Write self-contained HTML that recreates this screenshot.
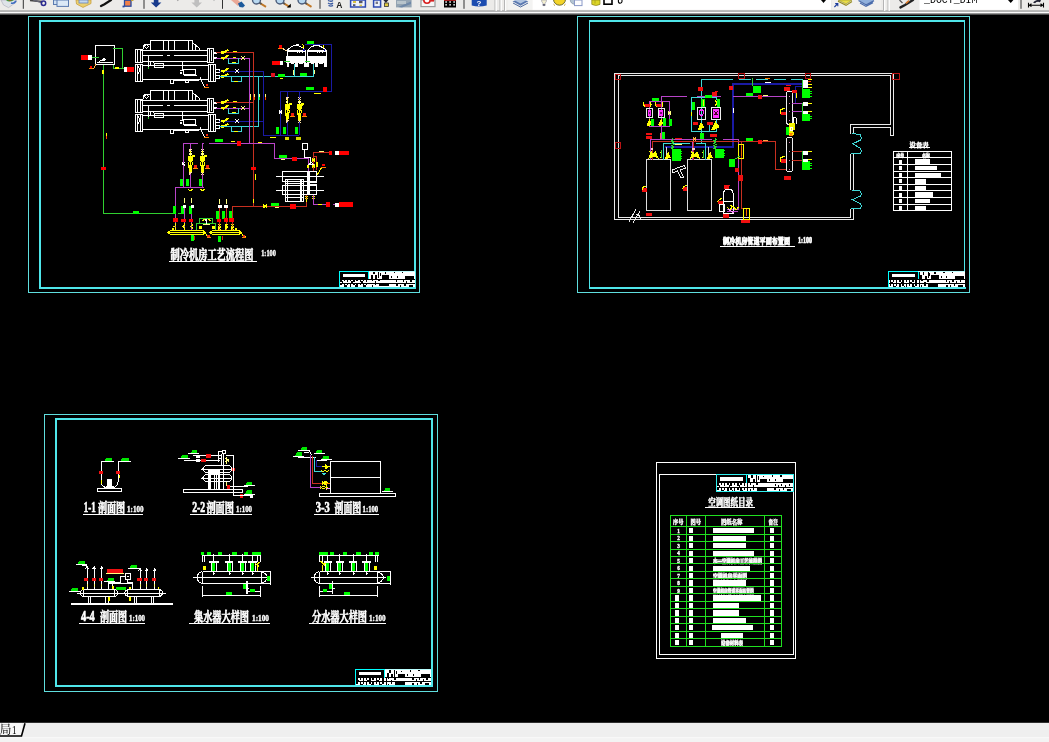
<!DOCTYPE html>
<html lang="zh"><head><meta charset="utf-8"><title>AutoCAD</title>
<style>
html,body{margin:0;padding:0;background:#000;}
body{width:1049px;height:742px;overflow:hidden;position:relative;font-family:"Liberation Sans","Noto Sans CJK SC",sans-serif;}
svg{position:absolute;left:0;top:0;will-change:transform;}
svg text{white-space:pre;}
</style></head><body>
<svg width="1049" height="742" viewBox="0 0 1049 742">
<g id="d1" shape-rendering="crispEdges"><rect x="28.5" y="16.5" width="391.0" height="276.0" fill="none" stroke="#5fdede" stroke-width="1" />
<rect x="40" y="21" width="375" height="267" fill="none" stroke="#4fe6ea" stroke-width="2" />
<rect x="95.5" y="45" width="19.0" height="19.5" fill="none" stroke="#fff" stroke-width="1" />
<rect x="81" y="55" width="7" height="5" fill="#ff0000" stroke="none" stroke-width="1" />
<rect x="88" y="55" width="3.6" height="5" fill="#fff" stroke="none" stroke-width="1" />
<line x1="91.6" y1="57.5" x2="99" y2="57.5" stroke="#30d030" stroke-width="1" />
<line x1="97" y1="62" x2="113" y2="62" stroke="#fff" stroke-width="1" />
<polyline points="99,62 101.5,60 105,60" stroke="#fff" stroke-width="1" fill="none" />
<polyline points="102.5,60 104,58.5 105.5,60" stroke="#fff" stroke-width="1" fill="none" />
<polyline points="113,48.5 122,48.5 122,68 124,68" stroke="#30d030" stroke-width="1" fill="none" />
<polyline points="113,64.5 113,68 122,68" stroke="#30d030" stroke-width="1" fill="none" />
<line x1="115" y1="68" x2="118.5" y2="68" stroke="#ffff00" stroke-width="2" />
<rect x="124" y="67" width="3" height="5" fill="#fff" stroke="none" stroke-width="1" />
<rect x="127" y="67" width="7" height="5" fill="#ff0000" stroke="none" stroke-width="1" />
<polyline points="103.3,64.5 103.3,213.5 175,213.5" stroke="#30d030" stroke-width="1" fill="none" />
<line x1="103.3" y1="70" x2="103.3" y2="73.5" stroke="#ffff00" stroke-width="2" />
<rect x="89.8" y="65.5" width="2.5" height="2.3" fill="#ff0000" stroke="none" stroke-width="1" />
<line x1="88.5" y1="68.6" x2="93.5" y2="68.6" stroke="#ff8000" stroke-width="1" />
<line x1="93.5" y1="68.6" x2="95.8" y2="64.5" stroke="#ffb040" stroke-width="1" />
<rect x="101" y="166.6" width="5" height="3.0" fill="#ff0000" stroke="none" stroke-width="1" />
<line x1="106.3" y1="133" x2="106.3" y2="139" stroke="#ffff00" stroke-width="1" />
<line x1="106.3" y1="136" x2="106.3" y2="139" stroke="#f40" stroke-width="1" />
<rect x="133.3" y="210.6" width="6.0" height="3.8" fill="#00ff00" stroke="none" stroke-width="1" />
<rect x="150.5" y="40.3" width="42.0" height="10.2" fill="none" stroke="#fff" stroke-width="1" />
<line x1="163.5" y1="40.3" x2="163.5" y2="50.5" stroke="#fff" stroke-width="1" />
<line x1="168.5" y1="40.3" x2="168.5" y2="50.5" stroke="#fff" stroke-width="1" />
<line x1="174.5" y1="40.3" x2="174.5" y2="50.5" stroke="#fff" stroke-width="1" />
<line x1="188.5" y1="40.3" x2="188.5" y2="50.5" stroke="#fff" stroke-width="1" />
<path d="M150.5,44 h-3.5 q-3,0 -3.5,3 l-1,3.5" stroke="#fff" stroke-width="1" fill="none" />
<circle cx="146.5" cy="46.5" r="1.6" fill="none" stroke="#fff" stroke-width="1"/>
<polyline points="192.5,42.5 199,48 199,50.5" stroke="#fff" stroke-width="1" fill="none" />
<polyline points="195,45 195,50.5" stroke="#fff" stroke-width="1" fill="none" />
<line x1="141" y1="50.5" x2="207.5" y2="50.5" stroke="#fff" stroke-width="1" />
<line x1="142" y1="55.5" x2="163" y2="55.5" stroke="#fff" stroke-width="1" />
<line x1="167" y1="55.5" x2="170" y2="55.5" stroke="#fff" stroke-width="1" />
<line x1="174" y1="55.5" x2="207.5" y2="55.5" stroke="#fff" stroke-width="1" />
<line x1="142" y1="61.5" x2="207.5" y2="61.5" stroke="#fff" stroke-width="1" />
<line x1="142.5" y1="65" x2="208" y2="65" stroke="#fff" stroke-width="1" />
<line x1="142.5" y1="79.6" x2="208" y2="79.6" stroke="#fff" stroke-width="1" />
<rect x="135.6" y="49.5" width="6.4" height="13.0" fill="none" stroke="#fff" stroke-width="1" />
<line x1="137.6" y1="49.5" x2="137.6" y2="62.5" stroke="#fff" stroke-width="1" />
<line x1="140" y1="49.5" x2="140" y2="62.5" stroke="#fff" stroke-width="1" />
<rect x="135.6" y="64" width="6.9" height="17" fill="none" stroke="#fff" stroke-width="1" />
<line x1="137.8" y1="64" x2="137.8" y2="81" stroke="#fff" stroke-width="1" />
<line x1="140.2" y1="64" x2="140.2" y2="81" stroke="#fff" stroke-width="1" />
<polyline points="138,66 140,70 138,74" stroke="#fff" stroke-width="1" fill="none" />
<rect x="207.5" y="48.5" width="5.5" height="14.0" fill="none" stroke="#fff" stroke-width="1" />
<line x1="209.5" y1="48.5" x2="209.5" y2="62.5" stroke="#fff" stroke-width="1" />
<line x1="211.3" y1="50" x2="211.3" y2="61" stroke="#fff" stroke-width="1" />
<rect x="208" y="64.5" width="7.5" height="16.5" fill="none" stroke="#fff" stroke-width="1" />
<line x1="210.2" y1="64.5" x2="210.2" y2="81" stroke="#fff" stroke-width="1" />
<line x1="213" y1="64.5" x2="213" y2="81" stroke="#fff" stroke-width="1" />
<line x1="213" y1="52.5" x2="217" y2="52.5" stroke="#fff" stroke-width="2" />
<line x1="213" y1="58.2" x2="217" y2="58.2" stroke="#fff" stroke-width="2" />
<rect x="215.5" y="69.6" width="4.0" height="3.0" fill="none" stroke="#fff" stroke-width="1" />
<rect x="215.5" y="75" width="4.0" height="3" fill="none" stroke="#fff" stroke-width="1" />
<line x1="148" y1="55.5" x2="148" y2="67" stroke="#fff" stroke-width="1" />
<line x1="148" y1="66.5" x2="148" y2="68.5" stroke="#30d030" stroke-width="1" />
<line x1="150.5" y1="61.5" x2="150.5" y2="65" stroke="#fff" stroke-width="1" />
<rect x="154.5" y="63.6" width="9.0" height="4.0" fill="none" stroke="#fff" stroke-width="1" />
<polyline points="153,62 154.5,63.6" stroke="#fff" stroke-width="1" fill="none" />
<line x1="182.5" y1="61.5" x2="182.5" y2="70.5" stroke="#fff" stroke-width="1" />
<line x1="179.5" y1="70.5" x2="183.5" y2="70.5" stroke="#fff" stroke-width="1" />
<rect x="183.5" y="69.6" width="12.0" height="4.9" fill="none" stroke="#fff" stroke-width="1" />
<circle cx="181" cy="73" r="0.9" fill="none" stroke="#fff" stroke-width="1"/>
<line x1="184" y1="75.5" x2="196.5" y2="75.5" stroke="#fff" stroke-width="1" />
<rect x="170" y="79.6" width="3.5" height="3.9" fill="none" stroke="#fff" stroke-width="1" />
<rect x="185" y="80.5" width="3.5" height="2.1" fill="none" stroke="#fff" stroke-width="1" />
<rect x="173.5" y="79.6" width="25.5" height="1.4" fill="#fff" stroke="none" stroke-width="1" />
<line x1="200" y1="77.5" x2="204.5" y2="87" stroke="#fff" stroke-width="1" />
<rect x="205.5" y="84" width="2.1" height="2" fill="#f02010" stroke="none" stroke-width="1" />
<line x1="204.3" y1="87.2" x2="209" y2="87.2" stroke="#ff8000" stroke-width="1" />
<rect x="150.5" y="90.3" width="42.0" height="10.2" fill="none" stroke="#fff" stroke-width="1" />
<line x1="163.5" y1="90.3" x2="163.5" y2="100.5" stroke="#fff" stroke-width="1" />
<line x1="168.5" y1="90.3" x2="168.5" y2="100.5" stroke="#fff" stroke-width="1" />
<line x1="174.5" y1="90.3" x2="174.5" y2="100.5" stroke="#fff" stroke-width="1" />
<line x1="188.5" y1="90.3" x2="188.5" y2="100.5" stroke="#fff" stroke-width="1" />
<path d="M150.5,94 h-3.5 q-3,0 -3.5,3 l-1,3.5" stroke="#fff" stroke-width="1" fill="none" />
<circle cx="146.5" cy="96.5" r="1.6" fill="none" stroke="#fff" stroke-width="1"/>
<polyline points="192.5,92.5 199,98 199,100.5" stroke="#fff" stroke-width="1" fill="none" />
<polyline points="195,95 195,100.5" stroke="#fff" stroke-width="1" fill="none" />
<line x1="141" y1="100.5" x2="207.5" y2="100.5" stroke="#fff" stroke-width="1" />
<line x1="142" y1="105.5" x2="163" y2="105.5" stroke="#fff" stroke-width="1" />
<line x1="167" y1="105.5" x2="170" y2="105.5" stroke="#fff" stroke-width="1" />
<line x1="174" y1="105.5" x2="207.5" y2="105.5" stroke="#fff" stroke-width="1" />
<line x1="142" y1="111.5" x2="207.5" y2="111.5" stroke="#fff" stroke-width="1" />
<line x1="142.5" y1="115" x2="208" y2="115" stroke="#fff" stroke-width="1" />
<line x1="142.5" y1="129.6" x2="208" y2="129.6" stroke="#fff" stroke-width="1" />
<rect x="135.6" y="99.5" width="6.4" height="13.0" fill="none" stroke="#fff" stroke-width="1" />
<line x1="137.6" y1="99.5" x2="137.6" y2="112.5" stroke="#fff" stroke-width="1" />
<line x1="140" y1="99.5" x2="140" y2="112.5" stroke="#fff" stroke-width="1" />
<rect x="135.6" y="114" width="6.9" height="17" fill="none" stroke="#fff" stroke-width="1" />
<line x1="137.8" y1="114" x2="137.8" y2="131" stroke="#fff" stroke-width="1" />
<line x1="140.2" y1="114" x2="140.2" y2="131" stroke="#fff" stroke-width="1" />
<polyline points="138,116 140,120 138,124" stroke="#fff" stroke-width="1" fill="none" />
<rect x="207.5" y="98.5" width="5.5" height="14.0" fill="none" stroke="#fff" stroke-width="1" />
<line x1="209.5" y1="98.5" x2="209.5" y2="112.5" stroke="#fff" stroke-width="1" />
<line x1="211.3" y1="100" x2="211.3" y2="111" stroke="#fff" stroke-width="1" />
<rect x="208" y="114.5" width="7.5" height="16.5" fill="none" stroke="#fff" stroke-width="1" />
<line x1="210.2" y1="114.5" x2="210.2" y2="131" stroke="#fff" stroke-width="1" />
<line x1="213" y1="114.5" x2="213" y2="131" stroke="#fff" stroke-width="1" />
<line x1="213" y1="102.5" x2="217" y2="102.5" stroke="#fff" stroke-width="2" />
<line x1="213" y1="108.2" x2="217" y2="108.2" stroke="#fff" stroke-width="2" />
<rect x="215.5" y="119.6" width="4.0" height="3.0" fill="none" stroke="#fff" stroke-width="1" />
<rect x="215.5" y="125" width="4.0" height="3" fill="none" stroke="#fff" stroke-width="1" />
<line x1="148" y1="105.5" x2="148" y2="117" stroke="#fff" stroke-width="1" />
<line x1="148" y1="116.5" x2="148" y2="118.5" stroke="#30d030" stroke-width="1" />
<line x1="150.5" y1="111.5" x2="150.5" y2="115" stroke="#fff" stroke-width="1" />
<rect x="154.5" y="113.6" width="9.0" height="4.0" fill="none" stroke="#fff" stroke-width="1" />
<polyline points="153,112 154.5,113.6" stroke="#fff" stroke-width="1" fill="none" />
<line x1="182.5" y1="111.5" x2="182.5" y2="120.5" stroke="#fff" stroke-width="1" />
<line x1="179.5" y1="120.5" x2="183.5" y2="120.5" stroke="#fff" stroke-width="1" />
<rect x="183.5" y="119.6" width="12.0" height="4.9" fill="none" stroke="#fff" stroke-width="1" />
<circle cx="181" cy="123" r="0.9" fill="none" stroke="#fff" stroke-width="1"/>
<line x1="184" y1="125.5" x2="196.5" y2="125.5" stroke="#fff" stroke-width="1" />
<rect x="170" y="129.6" width="3.5" height="3.9" fill="none" stroke="#fff" stroke-width="1" />
<rect x="185" y="130.5" width="3.5" height="2.1" fill="none" stroke="#fff" stroke-width="1" />
<rect x="173.5" y="129.6" width="25.5" height="1.4" fill="#fff" stroke="none" stroke-width="1" />
<line x1="200" y1="127.5" x2="204.5" y2="137" stroke="#fff" stroke-width="1" />
<rect x="205.5" y="134" width="2.1" height="2" fill="#f02010" stroke="none" stroke-width="1" />
<line x1="204.3" y1="137.2" x2="209" y2="137.2" stroke="#ff8000" stroke-width="1" />
<line x1="216" y1="52.5" x2="253.7" y2="52.5" stroke="#c83020" stroke-width="1" />
<line x1="216" y1="58.2" x2="249.5" y2="58.2" stroke="#b844c8" stroke-width="1" />
<line x1="219" y1="71.2" x2="263.5" y2="71.2" stroke="#1a1aa4" stroke-width="1" />
<polyline points="228,58.2 228,63 238.5,63 238.5,58.2" stroke="#40d8d8" stroke-width="1" fill="none" />
<polyline points="231,76.5 231,81.2 241,81.2 241,76.5" stroke="#40d8d8" stroke-width="1" fill="none" />
<line x1="232" y1="62.5" x2="236" y2="62.5" stroke="#ffff00" stroke-width="1" />
<line x1="234" y1="81" x2="238" y2="81" stroke="#ffff00" stroke-width="1" />
<rect x="220.5" y="51.3" width="3.0" height="2.4" fill="#ffff00" stroke="none" stroke-width="1" />
<line x1="223" y1="53.3" x2="228.5" y2="49.5" stroke="#ffff00" stroke-width="2" />
<rect x="220.5" y="57.0" width="3.0" height="2.4" fill="#ffff00" stroke="none" stroke-width="1" />
<line x1="223" y1="59.0" x2="228.5" y2="55.2" stroke="#ffff00" stroke-width="2" />
<rect x="220.5" y="70.0" width="3.0" height="2.4" fill="#ffff00" stroke="none" stroke-width="1" />
<line x1="223" y1="72.0" x2="228.5" y2="68.2" stroke="#ffff00" stroke-width="2" />
<rect x="220.5" y="75.3" width="3.0" height="2.4" fill="#ffff00" stroke="none" stroke-width="1" />
<line x1="223" y1="77.3" x2="228.5" y2="73.5" stroke="#ffff00" stroke-width="2" />
<line x1="233" y1="51.5" x2="236.5" y2="51.5" stroke="#ffff00" stroke-width="1" />
<line x1="232.5" y1="57.5" x2="236" y2="57.5" stroke="#ffff00" stroke-width="1" />
<line x1="241.2" y1="56.2" x2="244.8" y2="59.8" stroke="#ffff80" stroke-width="1" />
<line x1="241.2" y1="59.8" x2="244.8" y2="56.2" stroke="#ffff80" stroke-width="1" />
<line x1="235.2" y1="69.2" x2="238.8" y2="72.8" stroke="#fff" stroke-width="1" />
<line x1="235.2" y1="72.8" x2="238.8" y2="69.2" stroke="#fff" stroke-width="1" />
<line x1="244" y1="76" x2="247.5" y2="76" stroke="#ffff00" stroke-width="1" />
<line x1="216" y1="102.5" x2="253.7" y2="102.5" stroke="#c83020" stroke-width="1" />
<line x1="216" y1="108.2" x2="249.5" y2="108.2" stroke="#b844c8" stroke-width="1" />
<line x1="219" y1="121.2" x2="263.5" y2="121.2" stroke="#1a1aa4" stroke-width="1" />
<polyline points="228,108.2 228,113 238.5,113 238.5,108.2" stroke="#40d8d8" stroke-width="1" fill="none" />
<polyline points="231,126.5 231,131.2 241,131.2 241,126.5" stroke="#40d8d8" stroke-width="1" fill="none" />
<line x1="232" y1="112.5" x2="236" y2="112.5" stroke="#ffff00" stroke-width="1" />
<line x1="234" y1="131" x2="238" y2="131" stroke="#ffff00" stroke-width="1" />
<rect x="220.5" y="101.3" width="3.0" height="2.4" fill="#ffff00" stroke="none" stroke-width="1" />
<line x1="223" y1="103.3" x2="228.5" y2="99.5" stroke="#ffff00" stroke-width="2" />
<rect x="220.5" y="107.0" width="3.0" height="2.4" fill="#ffff00" stroke="none" stroke-width="1" />
<line x1="223" y1="109.0" x2="228.5" y2="105.2" stroke="#ffff00" stroke-width="2" />
<rect x="220.5" y="120.0" width="3.0" height="2.4" fill="#ffff00" stroke="none" stroke-width="1" />
<line x1="223" y1="122.0" x2="228.5" y2="118.2" stroke="#ffff00" stroke-width="2" />
<rect x="220.5" y="125.3" width="3.0" height="2.4" fill="#ffff00" stroke="none" stroke-width="1" />
<line x1="223" y1="127.3" x2="228.5" y2="123.5" stroke="#ffff00" stroke-width="2" />
<line x1="233" y1="101.5" x2="236.5" y2="101.5" stroke="#ffff00" stroke-width="1" />
<line x1="232.5" y1="107.5" x2="236" y2="107.5" stroke="#ffff00" stroke-width="1" />
<line x1="241.2" y1="106.2" x2="244.8" y2="109.8" stroke="#ffff80" stroke-width="1" />
<line x1="241.2" y1="109.8" x2="244.8" y2="106.2" stroke="#ffff80" stroke-width="1" />
<line x1="235.2" y1="119.2" x2="238.8" y2="122.8" stroke="#fff" stroke-width="1" />
<line x1="235.2" y1="122.8" x2="238.8" y2="119.2" stroke="#fff" stroke-width="1" />
<line x1="244" y1="126" x2="247.5" y2="126" stroke="#ffff00" stroke-width="1" />
<line x1="219" y1="76.5" x2="314" y2="76.5" stroke="#40d8d8" stroke-width="1" />
<line x1="219" y1="126.5" x2="258.7" y2="126.5" stroke="#40d8d8" stroke-width="1" />
<line x1="253.7" y1="52.5" x2="253.7" y2="206" stroke="#c83020" stroke-width="1" />
<polyline points="249.5,58.2 249.5,143.2" stroke="#b844c8" stroke-width="1" fill="none" />
<line x1="258.7" y1="76.5" x2="258.7" y2="126.5" stroke="#40d8d8" stroke-width="1" />
<polyline points="263.5,71.2 263.5,135.3 299.4,135.3" stroke="#1a1aa4" stroke-width="1" fill="none" />
<line x1="250.5" y1="93.5" x2="250.5" y2="100" stroke="#ffff80" stroke-width="1" />
<line x1="250.5" y1="97" x2="250.5" y2="100" stroke="#ffff00" stroke-width="1" />
<line x1="254.5" y1="93.5" x2="254.5" y2="100" stroke="#ffff80" stroke-width="1" />
<line x1="254.5" y1="97" x2="254.5" y2="100" stroke="#f40" stroke-width="1" />
<line x1="259.5" y1="93.5" x2="259.5" y2="100" stroke="#ffff80" stroke-width="1" />
<line x1="259.5" y1="97" x2="259.5" y2="100" stroke="#00ff00" stroke-width="1" />
<line x1="265.5" y1="93.5" x2="265.5" y2="100" stroke="#ffff80" stroke-width="1" />
<line x1="265.5" y1="97" x2="265.5" y2="100" stroke="#f40" stroke-width="1" />
<rect x="271" y="73" width="3.6" height="4" fill="#e01020" stroke="none" stroke-width="1" />
<rect x="278" y="74" width="7" height="3.4" fill="#00ff00" stroke="none" stroke-width="1" />
<line x1="280" y1="78" x2="283" y2="78" stroke="#ffff00" stroke-width="1" />
<rect x="300.2" y="73" width="6.8" height="3.2" fill="#00ff00" stroke="none" stroke-width="1" />
<path d="M286.8,50.6 L291.3,46.6 L295.3,45.4 L298.1,45.4 L302.1,47.4 L306.0,50.6" stroke="#fff" stroke-width="1" fill="none" />
<line x1="295.5" y1="44.8" x2="298.5" y2="44.8" stroke="#fff" stroke-width="1" />
<rect x="286.5" y="50.3" width="19.8" height="1.5" fill="#fff" stroke="none" stroke-width="1" />
<line x1="287.0" y1="51.8" x2="287.0" y2="56" stroke="#fff" stroke-width="1" />
<line x1="305.8" y1="51.8" x2="305.8" y2="56" stroke="#fff" stroke-width="1" />
<line x1="297.5" y1="51.8" x2="297.5" y2="53.4" stroke="#fff" stroke-width="1" />
<line x1="299.5" y1="51.8" x2="299.5" y2="53.4" stroke="#fff" stroke-width="1" />
<line x1="302.0" y1="51.8" x2="302.0" y2="53.4" stroke="#fff" stroke-width="1" />
<rect x="286.3" y="55.7" width="20.0" height="7.3" fill="#fff" stroke="none" stroke-width="1" />
<rect x="286.5" y="63" width="2.6" height="3.7" fill="#fff" stroke="none" stroke-width="1" />
<rect x="294.8" y="63" width="2.7" height="3.7" fill="#fff" stroke="none" stroke-width="1" />
<line x1="290.5" y1="63.6" x2="294.1" y2="63.6" stroke="#fff" stroke-width="1" />
<line x1="298.5" y1="63.6" x2="302.5" y2="63.6" stroke="#fff" stroke-width="1" />
<path d="M301.9,44.2 q2.6,1.6 0.8,3.8" stroke="#ffff00" stroke-width="1" fill="none" />
<rect x="303.3" y="49" width="1.8" height="2.2" fill="#1a1aa4" stroke="none" stroke-width="1" />
<path d="M307.1,50.6 L311.6,46.6 L315.6,45.4 L318.40000000000003,45.4 L322.40000000000003,47.4 L326.3,50.6" stroke="#fff" stroke-width="1" fill="none" />
<line x1="315.8" y1="44.8" x2="318.8" y2="44.8" stroke="#fff" stroke-width="1" />
<rect x="306.8" y="50.3" width="19.8" height="1.5" fill="#fff" stroke="none" stroke-width="1" />
<line x1="307.3" y1="51.8" x2="307.3" y2="56" stroke="#fff" stroke-width="1" />
<line x1="326.1" y1="51.8" x2="326.1" y2="56" stroke="#fff" stroke-width="1" />
<line x1="317.8" y1="51.8" x2="317.8" y2="53.4" stroke="#fff" stroke-width="1" />
<line x1="319.8" y1="51.8" x2="319.8" y2="53.4" stroke="#fff" stroke-width="1" />
<line x1="322.3" y1="51.8" x2="322.3" y2="53.4" stroke="#fff" stroke-width="1" />
<rect x="306.6" y="55.7" width="20.0" height="7.3" fill="#fff" stroke="none" stroke-width="1" />
<rect x="306.8" y="63" width="2.6" height="3.7" fill="#fff" stroke="none" stroke-width="1" />
<rect x="315.1" y="63" width="2.7" height="3.7" fill="#fff" stroke="none" stroke-width="1" />
<line x1="310.8" y1="63.6" x2="314.40000000000003" y2="63.6" stroke="#fff" stroke-width="1" />
<line x1="318.8" y1="63.6" x2="322.8" y2="63.6" stroke="#fff" stroke-width="1" />
<path d="M322.2,44.2 q2.6,1.6 0.8,3.8" stroke="#ffff00" stroke-width="1" fill="none" />
<rect x="323.6" y="49" width="1.8" height="2.2" fill="#1a1aa4" stroke="none" stroke-width="1" />
<rect x="324" y="63" width="3" height="3.7" fill="#fff" stroke="none" stroke-width="1" />
<rect x="304.4" y="63" width="4.2" height="3.7" fill="#fff" stroke="none" stroke-width="1" />
<rect x="307" y="41" width="7" height="2.9" fill="#00ff00" stroke="none" stroke-width="1" />
<polyline points="304.7,44.5 331.5,44.5 331.5,91.3 280.6,91.3 280.6,135.3" stroke="#1a1aa4" stroke-width="1" fill="none" />
<line x1="287.3" y1="91.3" x2="287.3" y2="135.3" stroke="#1a1aa4" stroke-width="1" />
<line x1="299.4" y1="91.3" x2="299.4" y2="135.3" stroke="#1a1aa4" stroke-width="1" />
<polyline points="294.7,64.3 294.7,76.5" stroke="#40d8d8" stroke-width="1" fill="none" />
<polyline points="313.7,64.3 313.7,76.5" stroke="#40d8d8" stroke-width="1" fill="none" />
<line x1="293.6" y1="70" x2="293.6" y2="74.5" stroke="#ffff80" stroke-width="1" />
<line x1="314.6" y1="70" x2="314.6" y2="74" stroke="#ffff80" stroke-width="1" />
<rect x="272" y="61" width="7.7" height="4" fill="#ff0000" stroke="none" stroke-width="1" />
<rect x="279.7" y="61" width="3.3" height="4" fill="#fff" stroke="none" stroke-width="1" />
<line x1="283.7" y1="61.5" x2="289.7" y2="61.5" stroke="#30d030" stroke-width="1" />
<line x1="305" y1="61.5" x2="309.7" y2="61.5" stroke="#30d030" stroke-width="1" />
<rect x="279" y="45" width="3" height="2.7" fill="#ff0000" stroke="none" stroke-width="1" />
<line x1="278" y1="48.5" x2="282.7" y2="48.5" stroke="#ff8000" stroke-width="1" />
<line x1="282.7" y1="48.5" x2="286.7" y2="51" stroke="#ffe0a0" stroke-width="1" />
<rect x="306" y="86.7" width="8.2" height="2.9" fill="#00ff00" stroke="none" stroke-width="1" />
<rect x="323" y="87" width="4" height="4.6" fill="#ff0000" stroke="none" stroke-width="1" />
<line x1="314" y1="93.3" x2="320.5" y2="93.3" stroke="#ffff00" stroke-width="1" />
<line x1="286.0" y1="97.1" x2="288.4" y2="99.5" stroke="#ffe0b0" stroke-width="1" />
<line x1="286.0" y1="99.5" x2="288.4" y2="97.1" stroke="#ffe0b0" stroke-width="1" />
<line x1="287.2" y1="99.3" x2="287.2" y2="120.3" stroke="#ffff00" stroke-width="1" />
<circle cx="287.2" cy="101.89999999999999" r="0.9" fill="#ffffc0" stroke="#ffffa0" stroke-width="1"/>
<ellipse cx="287.2" cy="106.7" rx="2.7" ry="3.2" fill="#ffff00"/>
<circle cx="290.4" cy="103.89999999999999" r="0.9" fill="#ffff00" stroke="#ffff00" stroke-width="1"/>
<line x1="288.2" y1="105.3" x2="290.4" y2="103.89999999999999" stroke="#ffff00" stroke-width="1" />
<circle cx="287.2" cy="111.5" r="2.1" fill="none" stroke="#ffff00" stroke-width="1"/>
<path d="M285.7,113.7 L288.7,113.7 L287.9,120.3 L286.5,120.3 Z" stroke="#ffff00" stroke-width="1" fill="#ffff00" />
<line x1="286.09999999999997" y1="120.2" x2="288.3" y2="122.39999999999999" stroke="#ffe0a0" stroke-width="1" />
<line x1="286.09999999999997" y1="122.39999999999999" x2="288.3" y2="120.2" stroke="#ffe0a0" stroke-width="1" />
<rect x="290.7" y="112.9" width="3.0" height="2.7" fill="#f02010" stroke="none" stroke-width="1" />
<line x1="289.9" y1="116.3" x2="294.8" y2="116.3" stroke="#ff9000" stroke-width="1" />
<line x1="298.2" y1="97.39999999999999" x2="300.59999999999997" y2="99.8" stroke="#ffe0b0" stroke-width="1" />
<line x1="298.2" y1="99.8" x2="300.59999999999997" y2="97.39999999999999" stroke="#ffe0b0" stroke-width="1" />
<line x1="299.4" y1="99.6" x2="299.4" y2="120.6" stroke="#ffff00" stroke-width="1" />
<circle cx="299.4" cy="102.19999999999999" r="0.9" fill="#ffffc0" stroke="#ffffa0" stroke-width="1"/>
<ellipse cx="299.4" cy="107.0" rx="2.7" ry="3.2" fill="#ffff00"/>
<circle cx="302.59999999999997" cy="104.19999999999999" r="0.9" fill="#ffff00" stroke="#ffff00" stroke-width="1"/>
<line x1="300.4" y1="105.6" x2="302.59999999999997" y2="104.19999999999999" stroke="#ffff00" stroke-width="1" />
<circle cx="299.4" cy="111.8" r="2.1" fill="none" stroke="#ffff00" stroke-width="1"/>
<path d="M297.9,114.0 L300.9,114.0 L300.09999999999997,120.6 L298.7,120.6 Z" stroke="#ffff00" stroke-width="1" fill="#ffff00" />
<line x1="298.29999999999995" y1="120.5" x2="300.5" y2="122.69999999999999" stroke="#ffe0a0" stroke-width="1" />
<line x1="298.29999999999995" y1="122.69999999999999" x2="300.5" y2="120.5" stroke="#ffe0a0" stroke-width="1" />
<rect x="302.9" y="113.2" width="3.0" height="2.7" fill="#f02010" stroke="none" stroke-width="1" />
<line x1="302.09999999999997" y1="116.6" x2="307.0" y2="116.6" stroke="#ff9000" stroke-width="1" />
<line x1="279.0" y1="110.5" x2="282.20000000000005" y2="113.69999999999999" stroke="#fff" stroke-width="1" />
<line x1="279.0" y1="113.69999999999999" x2="282.20000000000005" y2="110.5" stroke="#fff" stroke-width="1" />
<rect x="275.8" y="126.7" width="3.0" height="7.3" fill="#00ff00" stroke="none" stroke-width="1" />
<rect x="283" y="126.7" width="3" height="7.3" fill="#00ff00" stroke="none" stroke-width="1" />
<rect x="295.2" y="126.7" width="3.0" height="7.3" fill="#00ff00" stroke="none" stroke-width="1" />
<line x1="270.3" y1="137.3" x2="276" y2="137.3" stroke="#ffff00" stroke-width="1" />
<rect x="285" y="137" width="4" height="2.5" fill="#ffff00" stroke="none" stroke-width="1" opacity="0.85"/>
<rect x="296" y="137" width="5" height="2.5" fill="#ffff00" stroke="none" stroke-width="1" opacity="0.85"/>
<line x1="183" y1="143.3" x2="198" y2="143.3" stroke="#b844c8" stroke-width="1" />
<line x1="201.5" y1="143.3" x2="203.5" y2="143.3" stroke="#b844c8" stroke-width="1" />
<polyline points="209,143.3 274.5,143.3 274.5,158.6 308.2,158.6 308.2,171" stroke="#b844c8" stroke-width="1" fill="none" />
<rect x="215.2" y="139" width="7.7" height="2.8" fill="#00ff00" stroke="none" stroke-width="1" />
<rect x="236.5" y="141" width="4.5" height="5.2" fill="#ff0000" stroke="none" stroke-width="1" />
<line x1="231" y1="141.5" x2="235" y2="141.5" stroke="#ffff00" stroke-width="1" />
<line x1="258" y1="142" x2="262" y2="142" stroke="#ffff00" stroke-width="1" />
<line x1="183" y1="143.2" x2="183" y2="187.2" stroke="#b844c8" stroke-width="1" />
<line x1="190.3" y1="143.2" x2="190.3" y2="187.2" stroke="#b844c8" stroke-width="1" />
<line x1="202.5" y1="143.2" x2="202.5" y2="187.2" stroke="#b844c8" stroke-width="1" />
<polyline points="204,187.2 175.2,187.2 175.2,229.5" stroke="#b844c8" stroke-width="1" fill="none" />
<line x1="189.10000000000002" y1="149.20000000000002" x2="191.5" y2="151.6" stroke="#ffe0b0" stroke-width="1" />
<line x1="189.10000000000002" y1="151.6" x2="191.5" y2="149.20000000000002" stroke="#ffe0b0" stroke-width="1" />
<line x1="190.3" y1="151.4" x2="190.3" y2="172.4" stroke="#ffff00" stroke-width="1" />
<circle cx="190.3" cy="154.0" r="0.9" fill="#ffffc0" stroke="#ffffa0" stroke-width="1"/>
<ellipse cx="190.3" cy="158.8" rx="2.7" ry="3.2" fill="#ffff00"/>
<circle cx="193.5" cy="156.0" r="0.9" fill="#ffff00" stroke="#ffff00" stroke-width="1"/>
<line x1="191.3" y1="157.4" x2="193.5" y2="156.0" stroke="#ffff00" stroke-width="1" />
<circle cx="190.3" cy="163.6" r="2.1" fill="none" stroke="#ffff00" stroke-width="1"/>
<path d="M188.8,165.8 L191.8,165.8 L191.0,172.4 L189.60000000000002,172.4 Z" stroke="#ffff00" stroke-width="1" fill="#ffff00" />
<line x1="189.20000000000002" y1="172.3" x2="191.4" y2="174.5" stroke="#ffe0a0" stroke-width="1" />
<line x1="189.20000000000002" y1="174.5" x2="191.4" y2="172.3" stroke="#ffe0a0" stroke-width="1" />
<rect x="193.8" y="165.0" width="3.0" height="2.7" fill="#f02010" stroke="none" stroke-width="1" />
<line x1="193.0" y1="168.4" x2="197.9" y2="168.4" stroke="#ff9000" stroke-width="1" />
<path d="M188.3,189 q2,3.2 4,0" stroke="#ffff00" stroke-width="1" fill="none" />
<line x1="201.3" y1="149.20000000000002" x2="203.7" y2="151.6" stroke="#ffe0b0" stroke-width="1" />
<line x1="201.3" y1="151.6" x2="203.7" y2="149.20000000000002" stroke="#ffe0b0" stroke-width="1" />
<line x1="202.5" y1="151.4" x2="202.5" y2="172.4" stroke="#ffff00" stroke-width="1" />
<circle cx="202.5" cy="154.0" r="0.9" fill="#ffffc0" stroke="#ffffa0" stroke-width="1"/>
<ellipse cx="202.5" cy="158.8" rx="2.7" ry="3.2" fill="#ffff00"/>
<circle cx="205.7" cy="156.0" r="0.9" fill="#ffff00" stroke="#ffff00" stroke-width="1"/>
<line x1="203.5" y1="157.4" x2="205.7" y2="156.0" stroke="#ffff00" stroke-width="1" />
<circle cx="202.5" cy="163.6" r="2.1" fill="none" stroke="#ffff00" stroke-width="1"/>
<path d="M201.0,165.8 L204.0,165.8 L203.2,172.4 L201.8,172.4 Z" stroke="#ffff00" stroke-width="1" fill="#ffff00" />
<line x1="201.4" y1="172.3" x2="203.6" y2="174.5" stroke="#ffe0a0" stroke-width="1" />
<line x1="201.4" y1="174.5" x2="203.6" y2="172.3" stroke="#ffe0a0" stroke-width="1" />
<rect x="206.0" y="165.0" width="3.0" height="2.7" fill="#f02010" stroke="none" stroke-width="1" />
<line x1="205.2" y1="168.4" x2="210.1" y2="168.4" stroke="#ff9000" stroke-width="1" />
<path d="M200.5,189 q2,3.2 4,0" stroke="#ffff00" stroke-width="1" fill="none" />
<line x1="181.8" y1="162.3" x2="185.0" y2="165.5" stroke="#fff" stroke-width="1" />
<line x1="181.8" y1="165.5" x2="185.0" y2="162.3" stroke="#fff" stroke-width="1" />
<rect x="180.1" y="179.1" width="3.0" height="6.8" fill="#00ff00" stroke="none" stroke-width="1" />
<rect x="185.8" y="179.1" width="3.0" height="6.8" fill="#00ff00" stroke="none" stroke-width="1" />
<rect x="199" y="179.1" width="3" height="6.8" fill="#00ff00" stroke="none" stroke-width="1" />
<rect x="279.2" y="154.8" width="7.8" height="3.4" fill="#00ff00" stroke="none" stroke-width="1" />
<line x1="281" y1="159.5" x2="285" y2="159.5" stroke="#ffff80" stroke-width="1" />
<rect x="292" y="157" width="5" height="4" fill="#ff0000" stroke="none" stroke-width="1" />
<rect x="302.4" y="143.2" width="5.5" height="6.4" fill="none" stroke="#fff" stroke-width="1" />
<polyline points="304.4,149.6 304.4,157 310.3,157 310.3,164" stroke="#fff" stroke-width="1" fill="none" />
<polyline points="313.5,171 313.5,152.3 329.7,152.3" stroke="#c83020" stroke-width="1" fill="none" />
<polyline points="313.5,156.5 316.8,156.5 316.8,170" stroke="#c83020" stroke-width="1" fill="none" />
<line x1="319" y1="151.3" x2="324" y2="151.3" stroke="#ffff80" stroke-width="1" />
<rect x="329" y="151.2" width="3" height="3.8" fill="#ff0000" stroke="none" stroke-width="1" />
<rect x="335" y="151.2" width="4.2" height="3.8" fill="#fff" stroke="none" stroke-width="1" />
<rect x="339.2" y="151.2" width="9.8" height="3.8" fill="#ff0000" stroke="none" stroke-width="1" />
<rect x="306.5" y="164.5" width="2.0" height="3.5" fill="#ffff00" stroke="none" stroke-width="1" />
<rect x="316" y="162" width="2" height="4.5" fill="#ffff00" stroke="none" stroke-width="1" />
<line x1="312.0" y1="158.5" x2="315.0" y2="161.5" stroke="#ffff00" stroke-width="1" />
<line x1="312.0" y1="161.5" x2="315.0" y2="158.5" stroke="#ffff00" stroke-width="1" />
<line x1="312.0" y1="164.5" x2="315.0" y2="167.5" stroke="#ffff00" stroke-width="1" />
<line x1="312.0" y1="167.5" x2="315.0" y2="164.5" stroke="#ffff00" stroke-width="1" />
<path d="M309,164 l2,-2 l2,2 z" stroke="#fff" stroke-width="1" fill="none" />
<line x1="316.8" y1="175.4" x2="322" y2="167" stroke="#ffff00" stroke-width="1" />
<rect x="322" y="164" width="2.5" height="2" fill="#ff0000" stroke="none" stroke-width="1" />
<line x1="321" y1="167" x2="325.5" y2="167" stroke="#ff8000" stroke-width="1" />
<rect x="282.2" y="171.5" width="34.5" height="10.0" fill="none" stroke="#fff" stroke-width="1" />
<rect x="282.2" y="185.1" width="34.5" height="9.7" fill="none" stroke="#fff" stroke-width="1" />
<line x1="275.8" y1="176.3" x2="324.2" y2="176.3" stroke="#fff" stroke-width="1" />
<line x1="275.8" y1="190.5" x2="324.2" y2="190.5" stroke="#fff" stroke-width="1" />
<rect x="307.4" y="171.5" width="2.4" height="23.3" fill="#fff" stroke="none" stroke-width="1" />
<rect x="285" y="179.3" width="18.8" height="22.0" fill="none" stroke="#fff" stroke-width="1" />
<rect x="286.8" y="179.3" width="1.6" height="22.0" fill="#fff" stroke="none" stroke-width="1" />
<rect x="300.4" y="179.3" width="1.8" height="22.0" fill="#fff" stroke="none" stroke-width="1" />
<line x1="285" y1="183" x2="303.8" y2="183" stroke="#fff" stroke-width="1" />
<line x1="285" y1="197.5" x2="303.8" y2="197.5" stroke="#fff" stroke-width="1" />
<line x1="309.8" y1="182.5" x2="316.7" y2="182.5" stroke="#fff" stroke-width="1" />
<line x1="309.8" y1="184" x2="316.7" y2="184" stroke="#fff" stroke-width="1" />
<polyline points="253.7,206 232.4,206 232.4,230" stroke="#c83020" stroke-width="1" fill="none" />
<polyline points="253.7,206.2 306.6,206.2 306.6,195" stroke="#c83020" stroke-width="1" fill="none" />
<rect x="250.7" y="167.2" width="5.2" height="3.1" fill="#ff0000" stroke="none" stroke-width="1" />
<line x1="255.2" y1="173.5" x2="255.2" y2="180" stroke="#ffff00" stroke-width="1" />
<line x1="253.7" y1="198.6" x2="253.7" y2="203" stroke="#ffff00" stroke-width="1" />
<path d="M263,204.5 l3.5,3 v-3 l-3.5,3 z" stroke="#ffff00" stroke-width="1" fill="#ffff00" />
<rect x="271" y="203" width="8.3" height="3" fill="#00ff00" stroke="none" stroke-width="1" />
<line x1="275" y1="207.5" x2="279" y2="207.5" stroke="#ffff80" stroke-width="1" />
<rect x="290" y="204" width="6" height="4.8" fill="#ff0000" stroke="none" stroke-width="1" />
<line x1="305.0" y1="195.9" x2="308.20000000000005" y2="199.1" stroke="#ffff00" stroke-width="1" />
<line x1="305.0" y1="199.1" x2="308.20000000000005" y2="195.9" stroke="#ffff00" stroke-width="1" />
<line x1="311.7" y1="195.9" x2="314.90000000000003" y2="199.1" stroke="#ffff00" stroke-width="1" />
<line x1="311.7" y1="199.1" x2="314.90000000000003" y2="195.9" stroke="#ffff00" stroke-width="1" />
<line x1="306.6" y1="199" x2="306.6" y2="201.5" stroke="#ffff00" stroke-width="1" />
<line x1="313.3" y1="199" x2="313.3" y2="201.5" stroke="#ffff00" stroke-width="1" />
<polyline points="313.3,195 313.3,204.5 329.7,204.5" stroke="#b844c8" stroke-width="1" fill="none" />
<line x1="318" y1="204.5" x2="322" y2="204.5" stroke="#ffff00" stroke-width="1" />
<rect x="326" y="202" width="4" height="5" fill="#ff0000" stroke="none" stroke-width="1" />
<line x1="333" y1="204.5" x2="336" y2="204.5" stroke="#b844c8" stroke-width="1" />
<rect x="335.2" y="203" width="4.0" height="4" fill="#fff" stroke="none" stroke-width="1" />
<rect x="339.2" y="202" width="13.8" height="5" fill="#ff0000" stroke="none" stroke-width="1" />
<line x1="184" y1="198" x2="184" y2="203" stroke="#ffff80" stroke-width="1" />
<line x1="184" y1="207.8" x2="184" y2="230" stroke="#b844c8" stroke-width="1" />
<line x1="191.5" y1="198" x2="191.5" y2="203" stroke="#ffff80" stroke-width="1" />
<line x1="191.5" y1="207.8" x2="191.5" y2="230" stroke="#b844c8" stroke-width="1" />
<line x1="177.5" y1="213.5" x2="181.5" y2="213.5" stroke="#30d030" stroke-width="1" />
<rect x="173" y="206" width="2.9" height="7.6" fill="#00ff00" stroke="none" stroke-width="1" />
<rect x="181.2" y="206" width="2.9" height="7.6" fill="#00ff00" stroke="none" stroke-width="1" />
<rect x="189" y="206" width="2.9" height="7.6" fill="#00ff00" stroke="none" stroke-width="1" />
<rect x="182.5" y="205" width="3.5" height="2.8" fill="#fff" stroke="none" stroke-width="1" />
<rect x="190.5" y="205" width="3.5" height="2.8" fill="#fff" stroke="none" stroke-width="1" />
<rect x="173" y="218.2" width="5" height="3.6" fill="#ff0000" stroke="none" stroke-width="1" />
<rect x="181" y="219" width="5" height="2.8" fill="#ff0000" stroke="none" stroke-width="1" />
<rect x="189" y="219" width="4" height="2.8" fill="#ff0000" stroke="none" stroke-width="1" />
<polyline points="175.2,223.5 176.2,225 174.2,226.5 176.2,228 175.2,229.5" stroke="#ffff00" stroke-width="1" fill="none" />
<polyline points="184,223.5 185,225 183,226.5 185,228 184,229.5" stroke="#ffff00" stroke-width="1" fill="none" />
<polyline points="191.5,223.5 192.5,225 190.5,226.5 192.5,228 191.5,229.5" stroke="#ffff00" stroke-width="1" fill="none" />
<line x1="219.5" y1="198.5" x2="219.5" y2="203.5" stroke="#ffff80" stroke-width="1" />
<line x1="219.5" y1="207.8" x2="219.5" y2="230" stroke="#c83020" stroke-width="1" />
<line x1="226.2" y1="198.5" x2="226.2" y2="203.5" stroke="#ffff80" stroke-width="1" />
<line x1="226.2" y1="207.8" x2="226.2" y2="230" stroke="#c83020" stroke-width="1" />
<rect x="217.8" y="205" width="3.7" height="2.8" fill="#fff" stroke="none" stroke-width="1" />
<rect x="224.2" y="205" width="3.8" height="2.8" fill="#fff" stroke="none" stroke-width="1" />
<rect x="216" y="211" width="2.8" height="7.5" fill="#00ff00" stroke="none" stroke-width="1" />
<rect x="222" y="211" width="2.8" height="7.5" fill="#00ff00" stroke="none" stroke-width="1" />
<rect x="229.2" y="211" width="2.8" height="7.5" fill="#00ff00" stroke="none" stroke-width="1" />
<rect x="217" y="218.5" width="4" height="3.5" fill="#ff0000" stroke="none" stroke-width="1" />
<rect x="223.5" y="218" width="4.5" height="4" fill="#ff0000" stroke="none" stroke-width="1" />
<rect x="229" y="218" width="5" height="4" fill="#ff0000" stroke="none" stroke-width="1" />
<line x1="218.2" y1="224.2" x2="220.8" y2="226.8" stroke="#ffff00" stroke-width="1" />
<line x1="218.2" y1="226.8" x2="220.8" y2="224.2" stroke="#ffff00" stroke-width="1" />
<line x1="218.2" y1="226.89999999999998" x2="220.8" y2="229.5" stroke="#ffff00" stroke-width="1" />
<line x1="218.2" y1="229.5" x2="220.8" y2="226.89999999999998" stroke="#ffff00" stroke-width="1" />
<line x1="224.89999999999998" y1="224.2" x2="227.5" y2="226.8" stroke="#ffff00" stroke-width="1" />
<line x1="224.89999999999998" y1="226.8" x2="227.5" y2="224.2" stroke="#ffff00" stroke-width="1" />
<line x1="224.89999999999998" y1="226.89999999999998" x2="227.5" y2="229.5" stroke="#ffff00" stroke-width="1" />
<line x1="224.89999999999998" y1="229.5" x2="227.5" y2="226.89999999999998" stroke="#ffff00" stroke-width="1" />
<line x1="231.1" y1="224.2" x2="233.70000000000002" y2="226.8" stroke="#ffff00" stroke-width="1" />
<line x1="231.1" y1="226.8" x2="233.70000000000002" y2="224.2" stroke="#ffff00" stroke-width="1" />
<line x1="231.1" y1="226.89999999999998" x2="233.70000000000002" y2="229.5" stroke="#ffff00" stroke-width="1" />
<line x1="231.1" y1="229.5" x2="233.70000000000002" y2="226.89999999999998" stroke="#ffff00" stroke-width="1" />
<polyline points="196.5,230 196.5,223.5 215.5,223.5 215.5,230" stroke="#30d030" stroke-width="1" fill="none" />
<rect x="199.5" y="218.3" width="13.0" height="5.2" fill="none" stroke="#30d030" stroke-width="1" />
<line x1="202" y1="220.5" x2="205" y2="219.5" stroke="#ffff00" stroke-width="1" />
<line x1="208" y1="219.5" x2="211" y2="220.5" stroke="#ffff00" stroke-width="1" />
<polyline points="206,224.5 206,219.5" stroke="#fff" stroke-width="1" fill="none" />
<polyline points="204.8,221.2 206,219.2 207.2,221.2" stroke="#fff" stroke-width="1" fill="none" />
<line x1="203" y1="224.2" x2="209.5" y2="224.2" stroke="#ffff80" stroke-width="1" />
<circle cx="200.5" cy="227.5" r="1" fill="#ffff00" stroke="#ffff00" stroke-width="1"/>
<circle cx="213.5" cy="227.5" r="1" fill="#ffff00" stroke="#ffff00" stroke-width="1"/>
<line x1="169.5" y1="230.5" x2="203" y2="230.5" stroke="#ffff00" stroke-width="1" />
<line x1="168.5" y1="232.5" x2="205" y2="232.5" stroke="#ffff00" stroke-width="1" />
<line x1="169.5" y1="234.5" x2="203" y2="234.5" stroke="#ffff00" stroke-width="1" />
<polyline points="170.0,230.8 168.0,232.5 170.0,234.2" stroke="#ffff00" stroke-width="1" fill="none" />
<path d="M203,230.5 L205,232.5 L203,234.5 M205,232.5 q2,4 4.5,4.5" stroke="#ffff00" stroke-width="1" fill="none" />
<rect x="207.0" y="235" width="2.7" height="1.6" fill="#e83018" stroke="none" stroke-width="1" />
<line x1="206.5" y1="237.2" x2="210.5" y2="237.2" stroke="#ff8000" stroke-width="1" />
<line x1="211.5" y1="230.5" x2="239" y2="230.5" stroke="#ffff00" stroke-width="1" />
<line x1="210.5" y1="232.5" x2="241" y2="232.5" stroke="#ffff00" stroke-width="1" />
<line x1="211.5" y1="234.5" x2="239" y2="234.5" stroke="#ffff00" stroke-width="1" />
<polyline points="212.0,230.8 210.0,232.5 212.0,234.2" stroke="#ffff00" stroke-width="1" fill="none" />
<path d="M239,230.5 L241,232.5 L239,234.5 M241,232.5 q2,4 4.5,4.5" stroke="#ffff00" stroke-width="1" fill="none" />
<rect x="242.5" y="235" width="2.7" height="1.6" fill="#e83018" stroke="none" stroke-width="1" />
<line x1="242" y1="237.2" x2="246" y2="237.2" stroke="#ff8000" stroke-width="1" />
<rect x="172" y="228" width="2" height="2" fill="#ffff00" stroke="none" stroke-width="1" />
<rect x="235" y="227.5" width="2" height="2.5" fill="#ffff00" stroke="none" stroke-width="1" />
<rect x="191" y="235" width="3" height="5.6" fill="#00ff00" stroke="none" stroke-width="1" />
<line x1="194.8" y1="235.5" x2="194.8" y2="240" stroke="#e02010" stroke-width="1" />
<rect x="218" y="235.5" width="3" height="6.1" fill="#00ff00" stroke="none" stroke-width="1" />
<line x1="222" y1="236" x2="222" y2="240" stroke="#e02010" stroke-width="1" />
<line x1="253.7" y1="199.5" x2="253.7" y2="202.5" stroke="#ffff00" stroke-width="1" />
<rect x="263" y="205" width="2" height="2.8" fill="#ffff00" stroke="none" stroke-width="1" />
<text x="170.5" y="258.6" font-size="13" fill="#fff" font-family='"Liberation Serif","Noto Serif CJK SC",serif' font-weight="bold" textLength="83" lengthAdjust="spacingAndGlyphs" stroke="#fff" stroke-width="0.7">制冷机房工艺流程图</text>
<line x1="169" y1="261.4" x2="256.5" y2="261.4" stroke="#fff" stroke-width="1" />
<text x="261.2" y="256.2" font-size="8" fill="#fff" font-family='"Liberation Serif","Noto Serif CJK SC",serif' font-weight="bold" textLength="14.6" lengthAdjust="spacingAndGlyphs" stroke="#fff" stroke-width="0.4">1:100</text>
<rect x="339.5" y="271.3" width="75.0" height="15.7" fill="#000" stroke="none" stroke-width="1" />
<rect x="342.88" y="273.97" width="22.5" height="3.14" fill="#fff" stroke="none" stroke-width="1" />
<rect x="369.12" y="271.3" width="45.38" height="15.7" fill="#fff" stroke="none" stroke-width="1" />
<rect x="339.5" y="279.62" width="29.62" height="3.14" fill="#fff" stroke="none" stroke-width="1" />
<rect x="339.5" y="283.7" width="29.62" height="3.14" fill="#fff" stroke="none" stroke-width="1" />
<rect x="340.4" y="279.62" width="1.5" height="2.83" fill="#000" stroke="none" stroke-width="1" />
<rect x="341.9" y="281.35" width="1.5" height="1.41" fill="#000" stroke="none" stroke-width="1" />
<rect x="343.59" y="279.62" width="1.5" height="1.73" fill="#000" stroke="none" stroke-width="1" />
<rect x="346.77" y="279.62" width="1.5" height="2.83" fill="#000" stroke="none" stroke-width="1" />
<rect x="349.96" y="279.62" width="1.5" height="1.73" fill="#000" stroke="none" stroke-width="1" />
<rect x="351.46" y="281.35" width="1.5" height="1.41" fill="#000" stroke="none" stroke-width="1" />
<rect x="353.15" y="279.62" width="1.5" height="2.83" fill="#000" stroke="none" stroke-width="1" />
<rect x="356.34" y="279.62" width="1.5" height="1.73" fill="#000" stroke="none" stroke-width="1" />
<rect x="359.52" y="279.62" width="1.5" height="2.83" fill="#000" stroke="none" stroke-width="1" />
<rect x="361.02" y="281.35" width="1.5" height="1.41" fill="#000" stroke="none" stroke-width="1" />
<rect x="362.71" y="279.62" width="1.5" height="1.73" fill="#000" stroke="none" stroke-width="1" />
<rect x="365.9" y="279.62" width="1.5" height="2.83" fill="#000" stroke="none" stroke-width="1" />
<rect x="340.4" y="283.7" width="1.5" height="1.73" fill="#000" stroke="none" stroke-width="1" />
<rect x="343.59" y="283.7" width="1.5" height="2.83" fill="#000" stroke="none" stroke-width="1" />
<rect x="345.09" y="285.43" width="1.5" height="1.41" fill="#000" stroke="none" stroke-width="1" />
<rect x="346.77" y="283.7" width="1.5" height="1.73" fill="#000" stroke="none" stroke-width="1" />
<rect x="349.96" y="283.7" width="1.5" height="2.83" fill="#000" stroke="none" stroke-width="1" />
<rect x="353.15" y="283.7" width="1.5" height="1.73" fill="#000" stroke="none" stroke-width="1" />
<rect x="354.65" y="285.43" width="1.5" height="1.41" fill="#000" stroke="none" stroke-width="1" />
<rect x="356.34" y="283.7" width="1.5" height="2.83" fill="#000" stroke="none" stroke-width="1" />
<rect x="359.52" y="283.7" width="1.5" height="1.73" fill="#000" stroke="none" stroke-width="1" />
<rect x="362.71" y="283.7" width="1.5" height="2.83" fill="#000" stroke="none" stroke-width="1" />
<rect x="364.21" y="285.43" width="1.5" height="1.41" fill="#000" stroke="none" stroke-width="1" />
<rect x="365.9" y="283.7" width="1.5" height="1.73" fill="#000" stroke="none" stroke-width="1" />
<rect x="369.5" y="272.09" width="0.75" height="6.59" fill="#000" stroke="none" stroke-width="1" />
<rect x="370.62" y="274.75" width="1.88" height="3.93" fill="#000" stroke="none" stroke-width="1" />
<rect x="373.25" y="271.93" width="1.5" height="2.51" fill="#000" stroke="none" stroke-width="1" />
<rect x="375.12" y="275.38" width="1.88" height="3.3" fill="#000" stroke="none" stroke-width="1" />
<rect x="378.12" y="271.93" width="1.12" height="6.28" fill="#000" stroke="none" stroke-width="1" />
<rect x="379.62" y="272.87" width="1.12" height="3.14" fill="#000" stroke="none" stroke-width="1" />
<rect x="381.88" y="275.23" width="7.12" height="3.3" fill="#000" stroke="none" stroke-width="1" />
<rect x="390.88" y="275.54" width="1.12" height="2.04" fill="#000" stroke="none" stroke-width="1" />
<rect x="396.5" y="275.54" width="1.12" height="2.04" fill="#000" stroke="none" stroke-width="1" />
<rect x="404.75" y="275.54" width="9.0" height="2.98" fill="#000" stroke="none" stroke-width="1" />
<rect x="384.5" y="272.24" width="1.5" height="1.26" fill="#000" stroke="none" stroke-width="1" />
<rect x="393.5" y="272.09" width="1.5" height="1.1" fill="#000" stroke="none" stroke-width="1" />
<rect x="401.75" y="271.93" width="1.5" height="1.26" fill="#000" stroke="none" stroke-width="1" />
<rect x="369.5" y="279.62" width="0.9" height="3.14" fill="#000" stroke="none" stroke-width="1" />
<rect x="371.75" y="279.62" width="1.5" height="1.41" fill="#000" stroke="none" stroke-width="1" />
<rect x="374.75" y="281.35" width="1.5" height="1.41" fill="#000" stroke="none" stroke-width="1" />
<rect x="377.75" y="279.62" width="1.88" height="1.73" fill="#000" stroke="none" stroke-width="1" />
<rect x="396.12" y="280.09" width="1.12" height="1.88" fill="#000" stroke="none" stroke-width="1" />
<rect x="399.5" y="280.72" width="0.9" height="2.04" fill="#000" stroke="none" stroke-width="1" />
<rect x="402.5" y="279.94" width="1.12" height="1.73" fill="#000" stroke="none" stroke-width="1" />
<rect x="406.25" y="280.72" width="1.12" height="2.04" fill="#000" stroke="none" stroke-width="1" />
<rect x="410.0" y="279.94" width="1.5" height="2.04" fill="#000" stroke="none" stroke-width="1" />
<rect x="369.5" y="283.7" width="0.9" height="3.14" fill="#000" stroke="none" stroke-width="1" />
<rect x="371.75" y="285.12" width="1.12" height="1.73" fill="#000" stroke="none" stroke-width="1" />
<rect x="374.75" y="283.7" width="1.5" height="1.73" fill="#000" stroke="none" stroke-width="1" />
<rect x="378.88" y="283.86" width="9.75" height="2.51" fill="#000" stroke="none" stroke-width="1" />
<rect x="395.75" y="284.17" width="2.25" height="2.04" fill="#000" stroke="none" stroke-width="1" />
<rect x="400.25" y="284.96" width="1.12" height="1.88" fill="#000" stroke="none" stroke-width="1" />
<rect x="404.0" y="283.86" width="1.5" height="1.88" fill="#000" stroke="none" stroke-width="1" />
<rect x="408.5" y="284.8" width="4.12" height="2.04" fill="#000" stroke="none" stroke-width="1" />
<line x1="339.5" y1="279.15" x2="414.5" y2="279.15" stroke="#000" stroke-width="1" />
<line x1="339.5" y1="283.232" x2="414.5" y2="283.232" stroke="#000" stroke-width="1" />
<polyline points="339.5,287 339.5,271.3 368.75,271.3 368.75,279.15" stroke="#00ffff" stroke-width="1" fill="none" />
<line x1="368.75" y1="271.3" x2="414.5" y2="271.3" stroke="#bff" stroke-width="1" /></g>
<g id="d2" shape-rendering="crispEdges"><rect x="577.5" y="16.5" width="392.0" height="276.0" fill="none" stroke="#5fdede" stroke-width="1" />
<line x1="589.5" y1="21" x2="589.5" y2="288" stroke="#4fe6ea" stroke-width="1" />
<line x1="589" y1="21" x2="965" y2="21" stroke="#4fe6ea" stroke-width="2" />
<line x1="964.5" y1="21" x2="964.5" y2="288" stroke="#4fe6ea" stroke-width="1" />
<line x1="589" y1="288" x2="965.8" y2="288" stroke="#4fe6ea" stroke-width="2" />
<polyline points="614.4,219 614.4,73.6 893,73.6 893,135.6 890,135.6" stroke="#e8e8e8" stroke-width="1" fill="none" />
<polyline points="618,217 618,75.6 890,75.6 890,124.4 850.4,124.4 850.4,133.6" stroke="#e8e8e8" stroke-width="1" fill="none" />
<polyline points="890,135.6 890,127 853,127 853,133.6" stroke="#e8e8e8" stroke-width="1" fill="none" />
<line x1="850.4" y1="154" x2="850.4" y2="190" stroke="#e8e8e8" stroke-width="1" />
<line x1="853" y1="154" x2="853" y2="190" stroke="#e8e8e8" stroke-width="1" />
<polyline points="853,209 853,219 614.4,219" stroke="#e8e8e8" stroke-width="1" fill="none" />
<polyline points="850.4,209 850.4,217 618,217" stroke="#e8e8e8" stroke-width="1" fill="none" />
<path d="M851.5,133.6 L860,134.4 Q862,138.088 860.5,140.128 L852.5,143.8 L860.5,148.288 Q862,150.94 860.5,153.388 L851.5,154" stroke="#40d8d8" stroke-width="1" fill="none" />
<path d="M851.5,190 L860,190.8 Q862,194.18 860.5,196.08 L852.5,199.5 L860.5,203.68 Q862,206.15 860.5,208.43 L851.5,209" stroke="#40d8d8" stroke-width="1" fill="none" />
<rect x="615" y="74" width="5" height="5" fill="none" stroke="#b81414" stroke-width="1" />
<rect x="738.6" y="73" width="5.4" height="5.4" fill="none" stroke="#b81414" stroke-width="1" />
<rect x="805" y="73.5" width="5" height="4.5" fill="none" stroke="#b81414" stroke-width="1" />
<rect x="892" y="73.6" width="7" height="5.4" fill="none" stroke="#b81414" stroke-width="1" />
<rect x="615" y="142" width="5" height="6" fill="none" stroke="#b81414" stroke-width="1" />
<polyline points="629,222 636,209" stroke="#e8e8e8" stroke-width="1" fill="none" />
<polyline points="633,223 640,211" stroke="#e8e8e8" stroke-width="1" fill="none" />
<path d="M636,214 q5,1 4,6 l-5,-1" stroke="#e8e8e8" stroke-width="1" fill="none" />
<rect x="646.5" y="159.5" width="24.0" height="50.9" fill="none" stroke="#ddd" stroke-width="1" />
<rect x="687.5" y="159.5" width="24.0" height="50.9" fill="none" stroke="#ddd" stroke-width="1" />
<polyline points="672,170 684.5,165.3 685.5,168 680,170 683.5,177 681,178 677.5,171 673,172.7 672,170" stroke="#eee" stroke-width="1" fill="none" />
<polyline points="701.2,97.5 701.2,79.5 733,79.5" stroke="#40d8d8" stroke-width="1" fill="none" />
<line x1="738.5" y1="79.5" x2="803" y2="79.5" stroke="#40d8d8" stroke-width="1" stroke-dasharray="12 5.6"/>
<polyline points="803,83.6 733,83.6 733,147 665,147" stroke="#1a1aa4" stroke-width="2" fill="none" />
<line x1="733" y1="107.5" x2="733" y2="112.5" stroke="#fff" stroke-width="1" />
<line x1="733" y1="96.5" x2="787" y2="96.5" stroke="#b844c8" stroke-width="1" />
<rect x="758" y="95" width="3.5" height="3.5" fill="#f01010" stroke="none" stroke-width="1" />
<line x1="763" y1="95.5" x2="768" y2="95.5" stroke="#ffff80" stroke-width="1" />
<rect x="698" y="86.6" width="5" height="4.4" fill="#f01010" stroke="none" stroke-width="1" />
<rect x="729" y="86" width="4" height="4" fill="#f01010" stroke="none" stroke-width="1" />
<rect x="753" y="86" width="8" height="7" fill="#00ff00" stroke="none" stroke-width="1" />
<rect x="746" y="93" width="7" height="3" fill="#00ff00" stroke="none" stroke-width="1" />
<line x1="752" y1="78" x2="752" y2="86" stroke="#30d030" stroke-width="1" />
<line x1="765" y1="82" x2="771" y2="82" stroke="#fff" stroke-width="1" />
<line x1="765" y1="78.6" x2="770" y2="78.6" stroke="#ff8000" stroke-width="1" />
<polyline points="687,96.5 661.2,96.5 661.2,139.3" stroke="#b844c8" stroke-width="1" fill="none" />
<rect x="649.5" y="101" width="20.0" height="25.5" fill="none" stroke="#b844c8" stroke-width="1" />
<rect x="652" y="98" width="7" height="2.6" fill="#00ff00" stroke="none" stroke-width="1" />
<rect x="646.2" y="108.2" width="6.6" height="9.6" fill="none" stroke="#eee" stroke-width="1" />
<rect x="647.6" y="109.6" width="3.8" height="6.8" fill="#ff30ff" stroke="none" stroke-width="1" />
<rect x="648.6" y="111.5" width="1.6" height="2.5" fill="#303" stroke="none" stroke-width="1" opacity="0.7"/>
<rect x="644.2" y="104" width="5.4" height="3" fill="#f01010" stroke="none" stroke-width="1" />
<path d="M643.8000000000001,102.5 q-0.5,3 1.5,5" stroke="#ffff00" stroke-width="1" fill="none" />
<path d="M650.2,102.5 q1.5,2 0.5,4.5" stroke="#ffff00" stroke-width="1" fill="none" />
<path d="M647.0,125 l2.5,-5 l1.5,3.5 l-2,1.8 z" stroke="#ffff00" stroke-width="1" fill="#ffff00" />
<rect x="658" y="108.2" width="6.6" height="9.6" fill="none" stroke="#eee" stroke-width="1" />
<rect x="659.4" y="109.6" width="3.8" height="6.8" fill="#ff30ff" stroke="none" stroke-width="1" />
<rect x="660.4" y="111.5" width="1.6" height="2.5" fill="#303" stroke="none" stroke-width="1" opacity="0.7"/>
<rect x="656" y="104" width="5.4" height="3" fill="#f01010" stroke="none" stroke-width="1" />
<path d="M655.6,102.5 q-0.5,3 1.5,5" stroke="#ffff00" stroke-width="1" fill="none" />
<path d="M662,102.5 q1.5,2 0.5,4.5" stroke="#ffff00" stroke-width="1" fill="none" />
<path d="M658.8,125 l2.5,-5 l1.5,3.5 l-2,1.8 z" stroke="#ffff00" stroke-width="1" fill="#ffff00" />
<line x1="667.9" y1="111.60000000000001" x2="671.1" y2="114.8" stroke="#ffff80" stroke-width="1" />
<line x1="667.9" y1="114.8" x2="671.1" y2="111.60000000000001" stroke="#ffff80" stroke-width="1" />
<rect x="651" y="119" width="2.8" height="6.5" fill="#00ff00" stroke="none" stroke-width="1" />
<rect x="663" y="118" width="2.8" height="7.5" fill="#00ff00" stroke="none" stroke-width="1" />
<rect x="669.2" y="119" width="2.6" height="6.5" fill="#00ff00" stroke="none" stroke-width="1" />
<rect x="662.2" y="132" width="2.6" height="7" fill="#00ff00" stroke="none" stroke-width="1" />
<rect x="646" y="133" width="6" height="1.5" fill="#f01010" stroke="none" stroke-width="1" />
<rect x="646" y="135.6" width="6" height="3.4" fill="#f01010" stroke="none" stroke-width="1" />
<line x1="660" y1="133" x2="660" y2="139" stroke="#f66" stroke-width="1" />
<line x1="697" y1="96.5" x2="720.5" y2="96.5" stroke="#b844c8" stroke-width="1" />
<polyline points="716,100 716,97.5 691.5,97.5 691.5,131.5 716,131.5 716,119.5" stroke="#40d8d8" stroke-width="1" fill="none" />
<line x1="701.2" y1="97.5" x2="701.2" y2="143.5" stroke="#40d8d8" stroke-width="1" />
<line x1="709" y1="131.5" x2="709" y2="125" stroke="#40d8d8" stroke-width="1" />
<rect x="705" y="95" width="7" height="3" fill="#00ff00" stroke="none" stroke-width="1" />
<rect x="692" y="102" width="2.8" height="7.5" fill="#00ff00" stroke="none" stroke-width="1" />
<rect x="701" y="99" width="3.5" height="7.5" fill="#00ff00" stroke="none" stroke-width="1" />
<rect x="716.5" y="99" width="3.3" height="7.5" fill="#00ff00" stroke="none" stroke-width="1" />
<rect x="700" y="133" width="3.5" height="6.5" fill="#00ff00" stroke="none" stroke-width="1" />
<rect x="712" y="91.5" width="5" height="4.0" fill="#f01010" stroke="none" stroke-width="1" />
<line x1="715" y1="91" x2="717.5" y2="91" stroke="#f01010" stroke-width="1" />
<rect x="692.5" y="121.8" width="5.5" height="3.2" fill="#f01010" stroke="none" stroke-width="1" />
<rect x="707" y="121.8" width="5.5" height="3.2" fill="#f01010" stroke="none" stroke-width="1" />
<rect x="710" y="133.5" width="7" height="3.5" fill="#f01010" stroke="none" stroke-width="1" />
<rect x="697.2" y="107.5" width="8.3" height="12.0" fill="none" stroke="#eee" stroke-width="1" />
<rect x="711.5" y="107.5" width="9.0" height="12.0" fill="none" stroke="#eee" stroke-width="1" />
<path d="M699.3,110.3 h4 v3.4 l-2,2.6 l-2,-2.6 z" stroke="#ff30ff" stroke-width="1" fill="none" />
<line x1="700" y1="109.6" x2="703" y2="109.6" stroke="#ff30ff" stroke-width="1" />
<rect x="713.4" y="109.2" width="5.2" height="8.4" fill="#ff30ff" stroke="none" stroke-width="1" />
<path d="M714.5,111.5 l3,3.6 m0,-3.6 l-3,3.6" stroke="#402" stroke-width="1" fill="none" />
<path d="M698.5,129 l2.5,-6 l2.5,4 l-3,2 z" stroke="#ffff00" stroke-width="1" fill="#ffff00" />
<path d="M712,129 l3.5,-7 l3.5,5 l-4,2 z" stroke="#ffff00" stroke-width="1" fill="#ffff00" />
<line x1="691.7" y1="112" x2="691.7" y2="116" stroke="#ffff00" stroke-width="1" />
<line x1="703.5" y1="100" x2="703.5" y2="106" stroke="#ffff00" stroke-width="1" />
<path d="M715,100 l2,3 l-2,3" stroke="#ffff00" stroke-width="1" fill="none" />
<line x1="651" y1="139.3" x2="712" y2="139.3" stroke="#b844c8" stroke-width="1" />
<polyline points="723,139.3 738.5,139.3 738.5,209 727,209" stroke="#b844c8" stroke-width="1" fill="none" />
<polyline points="652,141.5 775,141.5 775,169 787,169" stroke="#c83020" stroke-width="1" fill="none" />
<line x1="652" y1="141.5" x2="652" y2="159.5" stroke="#c83020" stroke-width="1" />
<line x1="693.5" y1="139.3" x2="693.5" y2="159.5" stroke="#c83020" stroke-width="1" />
<line x1="692.3" y1="141.5" x2="692.3" y2="159.5" stroke="#b844c8" stroke-width="1" />
<line x1="650.8" y1="139.3" x2="650.8" y2="159.5" stroke="#b844c8" stroke-width="1" />
<polyline points="690,143.5 663.2,143.5 663.2,159.5" stroke="#40d8d8" stroke-width="1" fill="none" />
<polyline points="696,143.5 705.5,143.5 705.5,159.5" stroke="#40d8d8" stroke-width="1" fill="none" />
<line x1="666.5" y1="147" x2="666.5" y2="159.5" stroke="#ddd" stroke-width="1" />
<line x1="708" y1="147" x2="708" y2="159.5" stroke="#ddd" stroke-width="1" />
<polyline points="672.5,138.5 673.7,139.7 671.3,140.89999999999998 673.7,142.09999999999997 671.3,143.29999999999995 673.7,144.49999999999994 671.3,145.69999999999993 673.7,146.89999999999992 671.3,148.0999999999999 673.7,149.2999999999999" stroke="#30d030" stroke-width="1" fill="none" />
<polyline points="715,138.5 716.2,139.7 713.8,140.89999999999998 716.2,142.09999999999997 713.8,143.29999999999995 716.2,144.49999999999994 713.8,145.69999999999993 716.2,146.89999999999992 713.8,148.0999999999999 716.2,149.2999999999999" stroke="#30d030" stroke-width="1" fill="none" />
<rect x="672" y="149" width="8.5" height="11.5" fill="#00ff00" stroke="none" stroke-width="1" />
<rect x="715" y="148.5" width="8.5" height="9.0" fill="#00ff00" stroke="none" stroke-width="1" />
<line x1="680.5" y1="151" x2="682" y2="151" stroke="#00ff00" stroke-width="1" />
<line x1="680.5" y1="153.5" x2="682" y2="153.5" stroke="#00ff00" stroke-width="1" />
<line x1="680.5" y1="156" x2="682" y2="156" stroke="#00ff00" stroke-width="1" />
<line x1="680.5" y1="158.5" x2="682" y2="158.5" stroke="#00ff00" stroke-width="1" />
<line x1="723.5" y1="150.5" x2="725" y2="150.5" stroke="#00ff00" stroke-width="1" />
<line x1="723.5" y1="153" x2="725" y2="153" stroke="#00ff00" stroke-width="1" />
<line x1="723.5" y1="155.5" x2="725" y2="155.5" stroke="#00ff00" stroke-width="1" />
<rect x="675" y="138" width="6.5" height="1.4" fill="#f01010" stroke="none" stroke-width="1" />
<rect x="676" y="140.5" width="5.5" height="1.3" fill="#f01010" stroke="none" stroke-width="1" />
<line x1="675" y1="144.6" x2="681.5" y2="144.6" stroke="#ffff80" stroke-width="1" />
<line x1="692.9" y1="137.6" x2="696.1" y2="140.79999999999998" stroke="#fa4" stroke-width="1" />
<line x1="692.9" y1="140.79999999999998" x2="696.1" y2="137.6" stroke="#fa4" stroke-width="1" />
<path d="M649,158 l2.5,-6 l1.5,2.5 l2.5,-2.5 l2.5,6 l-4,-2 z" stroke="#ffff00" stroke-width="1" fill="#ffff00" />
<rect x="650.8" y="147.5" width="2.2" height="2.5" fill="#fcc" stroke="none" stroke-width="1" />
<path d="M649.5,151 q2.5,3 0,6" stroke="#ffff00" stroke-width="1" fill="none" />
<path d="M690.5,158 l2.5,-6 l1.5,2.5 l2.5,-2.5 l2.5,6 l-4,-2 z" stroke="#ffff00" stroke-width="1" fill="#ffff00" />
<rect x="692.3" y="147.5" width="2.2" height="2.5" fill="#fcc" stroke="none" stroke-width="1" />
<path d="M691.0,151 q2.5,3 0,6" stroke="#ffff00" stroke-width="1" fill="none" />
<path d="M660.5,152 q3,3 0,6 m8,-6 q-3,3 0,6" stroke="#ffff00" stroke-width="1" fill="none" />
<path d="M665.5,158.5 l2.5,-5 l2.5,4 z" stroke="#ffff00" stroke-width="1" fill="#ffff00" />
<path d="M661.0,150 q1.5,4 0.5,8" stroke="#30d030" stroke-width="1" fill="none" />
<path d="M702.5,152 q3,3 0,6 m8,-6 q-3,3 0,6" stroke="#ffff00" stroke-width="1" fill="none" />
<path d="M707.5,158.5 l2.5,-5 l2.5,4 z" stroke="#ffff00" stroke-width="1" fill="#ffff00" />
<path d="M703.0,150 q1.5,4 0.5,8" stroke="#30d030" stroke-width="1" fill="none" />
<polyline points="741,141.5 741,208 749,208 749,219" stroke="#c83020" stroke-width="1" fill="none" />
<rect x="738.8" y="144" width="4.7" height="14" fill="none" stroke="#ffff00" stroke-width="1" />
<line x1="741.5" y1="146" x2="741.5" y2="156" stroke="#f60" stroke-width="1" />
<rect x="729" y="159" width="6" height="8" fill="#00ff00" stroke="none" stroke-width="1" />
<line x1="735" y1="159" x2="740" y2="156" stroke="#30d030" stroke-width="1" />
<rect x="735" y="167.6" width="4.4" height="4.8" fill="#f01010" stroke="none" stroke-width="1" />
<rect x="738" y="175" width="5" height="6" fill="#f01010" stroke="none" stroke-width="1" />
<rect x="746" y="138" width="7" height="3" fill="#00ff00" stroke="none" stroke-width="1" />
<rect x="758" y="140" width="3.5" height="4" fill="#f01010" stroke="none" stroke-width="1" />
<line x1="763" y1="140.5" x2="768" y2="140.5" stroke="#fa4" stroke-width="1" />
<path d="M723.5,213 V194 q0,-5 4.8,-5 q4.8,0 4.8,5 V213 Z" stroke="#fff" stroke-width="1" fill="none" />
<line x1="723.5" y1="201" x2="733" y2="201" stroke="#fff" stroke-width="1" />
<rect x="719" y="204" width="5.5" height="7" fill="none" stroke="#fff" stroke-width="1" />
<rect x="724.4" y="185.6" width="5.0" height="3.0" fill="#f01010" stroke="none" stroke-width="1" />
<line x1="724" y1="185" x2="730" y2="185" stroke="#f01010" stroke-width="1" />
<rect x="718" y="201" width="5" height="3" fill="#f01010" stroke="none" stroke-width="1" />
<path d="M717.5,202 q1,-3 5,-3.5" stroke="#ffff00" stroke-width="1" fill="none" />
<path d="M727,207 l3,3 l3,-4 l3,4 l2.5,-3" stroke="#ffff00" stroke-width="1" fill="none" />
<path d="M730,205 l6,4" stroke="#ffff00" stroke-width="1" fill="none" />
<line x1="727" y1="211.5" x2="738" y2="211.5" stroke="#b844c8" stroke-width="1" />
<line x1="728" y1="209" x2="734" y2="213" stroke="#f9f" stroke-width="1" />
<rect x="723" y="214" width="6" height="4" fill="#f01010" stroke="none" stroke-width="1" />
<rect x="741" y="219.5" width="9" height="3.5" fill="#f01010" stroke="none" stroke-width="1" />
<rect x="743.5" y="208" width="6.0" height="11" fill="none" stroke="#ffff00" stroke-width="1" />
<line x1="746" y1="209" x2="746" y2="216" stroke="#f60" stroke-width="1" />
<rect x="646" y="212.6" width="6" height="3.8" fill="#f01010" stroke="none" stroke-width="1" />
<rect x="642.4" y="188" width="4.6" height="4" fill="#f01010" stroke="none" stroke-width="1" />
<path d="M642,189.5 q0.5,-3 4.5,-3.5" stroke="#ffff00" stroke-width="1" fill="none" />
<rect x="683" y="187.4" width="4.4" height="4.0" fill="#f01010" stroke="none" stroke-width="1" />
<path d="M682.6,189 q0.5,-3 4.5,-3.5" stroke="#ffff00" stroke-width="1" fill="none" />
<path d="M786.5,94 q0,-3 3,-3 q3,0 3,3 V122 q0,2.5 -3,2.5 q-3,0 -3,-2.5 Z" stroke="#eee" stroke-width="1" fill="none" />
<path d="M786.5,139.5 q0,-2.5 3,-2.5 q3,0 3,2.5 V169 q0,3 -3,3 q-3,0 -3,-3 Z" stroke="#eee" stroke-width="1" fill="none" />
<rect x="789" y="96.0" width="1" height="1.0" fill="#f9c" stroke="none" stroke-width="1" opacity="0.85"/>
<rect x="789" y="102.5" width="1" height="1.0" fill="#f9c" stroke="none" stroke-width="1" opacity="0.85"/>
<rect x="789" y="110.5" width="1" height="1.0" fill="#f9c" stroke="none" stroke-width="1" opacity="0.85"/>
<rect x="789" y="119.5" width="1" height="1.0" fill="#f9c" stroke="none" stroke-width="1" opacity="0.85"/>
<rect x="789" y="141.5" width="1" height="1.0" fill="#f9c" stroke="none" stroke-width="1" opacity="0.85"/>
<rect x="789" y="150.5" width="1" height="1.0" fill="#f9c" stroke="none" stroke-width="1" opacity="0.85"/>
<rect x="789" y="159.5" width="1" height="1.0" fill="#f9c" stroke="none" stroke-width="1" opacity="0.85"/>
<rect x="789" y="168.5" width="1" height="1.0" fill="#f9c" stroke="none" stroke-width="1" opacity="0.85"/>
<polyline points="803,86.5 795.5,86.5 795.5,103" stroke="#1a1aa4" stroke-width="1" fill="none" />
<line x1="792.4" y1="103" x2="803" y2="103" stroke="#b844c8" stroke-width="1" />
<line x1="792.4" y1="111" x2="803" y2="111" stroke="#b844c8" stroke-width="1" />
<line x1="792.4" y1="151" x2="803" y2="151" stroke="#c83020" stroke-width="1" />
<line x1="792.4" y1="160" x2="803" y2="160" stroke="#c83020" stroke-width="1" />
<line x1="802" y1="80" x2="802" y2="98" stroke="#30d030" stroke-width="1" />
<line x1="802" y1="103" x2="802" y2="120" stroke="#30d030" stroke-width="1" />
<line x1="802" y1="151" x2="802" y2="170" stroke="#30d030" stroke-width="1" />
<rect x="802" y="89" width="8" height="9" fill="#00ff00" stroke="none" stroke-width="1" />
<rect x="802" y="114" width="8" height="7" fill="#00ff00" stroke="none" stroke-width="1" />
<rect x="802" y="161" width="8" height="9" fill="#00ff00" stroke="none" stroke-width="1" />
<line x1="810" y1="91" x2="812" y2="91" stroke="#00ff00" stroke-width="1" />
<line x1="810" y1="93.5" x2="812" y2="93.5" stroke="#00ff00" stroke-width="1" />
<line x1="810" y1="96" x2="812" y2="96" stroke="#00ff00" stroke-width="1" />
<line x1="810" y1="116" x2="812" y2="116" stroke="#00ff00" stroke-width="1" />
<line x1="810" y1="118.5" x2="812" y2="118.5" stroke="#00ff00" stroke-width="1" />
<line x1="810" y1="163" x2="812" y2="163" stroke="#00ff00" stroke-width="1" />
<line x1="810" y1="165.5" x2="812" y2="165.5" stroke="#00ff00" stroke-width="1" />
<line x1="810" y1="168" x2="812" y2="168" stroke="#00ff00" stroke-width="1" />
<rect x="803" y="79.5" width="5" height="8.5" fill="#fff" stroke="none" stroke-width="1" />
<rect x="803" y="101.6" width="5" height="4.0" fill="#fff" stroke="none" stroke-width="1" />
<rect x="803" y="111" width="5" height="3" fill="#fff" stroke="none" stroke-width="1" />
<rect x="803" y="151" width="5" height="4" fill="#fff" stroke="none" stroke-width="1" />
<rect x="803" y="159" width="5" height="3" fill="#fff" stroke="none" stroke-width="1" />
<line x1="808" y1="79" x2="812" y2="79" stroke="#ffff00" stroke-width="1" />
<line x1="808" y1="84" x2="812" y2="84" stroke="#ffff00" stroke-width="1" />
<line x1="808" y1="87" x2="812" y2="87" stroke="#ffff00" stroke-width="1" />
<line x1="808" y1="103" x2="812" y2="103" stroke="#ffff00" stroke-width="1" />
<line x1="808" y1="111.5" x2="812" y2="111.5" stroke="#ffff00" stroke-width="1" />
<line x1="808" y1="151.5" x2="812" y2="151.5" stroke="#ffff00" stroke-width="1" />
<line x1="808" y1="159.5" x2="812" y2="159.5" stroke="#ffff00" stroke-width="1" />
<line x1="808" y1="81.5" x2="811" y2="81.5" stroke="#f40" stroke-width="1" />
<rect x="784" y="87.4" width="6" height="3.6" fill="#f01010" stroke="none" stroke-width="1" />
<line x1="786" y1="85.5" x2="791" y2="85.5" stroke="#f01010" stroke-width="1" />
<rect x="792" y="90" width="5" height="3" fill="#f01010" stroke="none" stroke-width="1" />
<line x1="796" y1="93" x2="796" y2="98" stroke="#ffff00" stroke-width="1" />
<rect x="781" y="111.5" width="5" height="3.5" fill="#f01010" stroke="none" stroke-width="1" />
<path d="M780.5,114 v-4 l4,-2" stroke="#ffff00" stroke-width="1" fill="none" />
<rect x="781" y="159" width="5" height="4" fill="#f01010" stroke="none" stroke-width="1" />
<path d="M780.5,162 v-4 l4,-2" stroke="#ffff00" stroke-width="1" fill="none" />
<rect x="784" y="175.6" width="7" height="4.0" fill="#f01010" stroke="none" stroke-width="1" />
<rect x="786" y="127" width="4" height="8" fill="#00ff00" stroke="none" stroke-width="1" />
<path d="M789,124 l5,-1 l1,6 l-3,1 l2,4 l-4,2 l-1,-6 z" stroke="#ffff00" stroke-width="1" fill="#ffff00" opacity="0.95"/>
<path d="M793.5,123 v-4.5 q0,-1.2 1.3,-1.2 q1.3,0 1.3,1.2 v5" stroke="#fff" stroke-width="1" fill="none" />
<circle cx="791.5" cy="129" r="1.6" fill="none" stroke="#fff" stroke-width="1"/>
<line x1="789.5" y1="133.0" x2="792.5" y2="136.0" stroke="#f80" stroke-width="1" />
<line x1="789.5" y1="136.0" x2="792.5" y2="133.0" stroke="#f80" stroke-width="1" />
<text x="909.6" y="146.6" font-size="5.8" fill="#fff" font-family='"Liberation Serif","Noto Serif CJK SC",serif' font-weight="bold" textLength="19" lengthAdjust="spacingAndGlyphs" stroke="#fff" stroke-width="0.4">设备表</text>
<line x1="909" y1="147.6" x2="929.5" y2="147.6" stroke="#fff" stroke-width="1" />
<rect x="893.3" y="151.2" width="58.4" height="59.5" fill="none" stroke="#fff" stroke-width="1" />
<line x1="907.6" y1="151.2" x2="907.6" y2="210.7" stroke="#fff" stroke-width="1" />
<rect x="896.4" y="153.8" width="7.8" height="3.2" fill="#fff" stroke="none" stroke-width="1" opacity="0.55"/>
<rect x="922.2" y="153.8" width="7.6" height="3.2" fill="#fff" stroke="none" stroke-width="1" opacity="0.55"/>
<text x="896.5" y="156.79999999999998" font-size="4.4" fill="#fff" font-family='"Liberation Serif","Noto Serif CJK SC",serif' font-weight="bold" textLength="7.6" lengthAdjust="spacingAndGlyphs" stroke="#fff" stroke-width="0.3">序号</text>
<text x="922.3" y="156.79999999999998" font-size="4.4" fill="#fff" font-family='"Liberation Serif","Noto Serif CJK SC",serif' font-weight="bold" textLength="7.4" lengthAdjust="spacingAndGlyphs" stroke="#fff" stroke-width="0.3">名称</text>
<line x1="893.3" y1="157.8111111111111" x2="951.7" y2="157.8111111111111" stroke="#fff" stroke-width="1" />
<rect x="915.2" y="159.41" width="14.6" height="4.41" fill="#fff" stroke="none" stroke-width="1" />
<rect x="899" y="159.61" width="2.8" height="4.01" fill="#fff" stroke="none" stroke-width="1" />
<line x1="893.3" y1="164.42222222222222" x2="951.7" y2="164.42222222222222" stroke="#fff" stroke-width="1" />
<rect x="915.2" y="166.02" width="22.2" height="4.41" fill="#fff" stroke="none" stroke-width="1" />
<rect x="899" y="166.22" width="2.8" height="4.01" fill="#fff" stroke="none" stroke-width="1" />
<line x1="893.3" y1="171.03333333333333" x2="951.7" y2="171.03333333333333" stroke="#fff" stroke-width="1" />
<rect x="915.2" y="172.63" width="25.6" height="4.41" fill="#fff" stroke="none" stroke-width="1" />
<rect x="899" y="172.83" width="2.8" height="4.01" fill="#fff" stroke="none" stroke-width="1" />
<line x1="893.3" y1="177.64444444444445" x2="951.7" y2="177.64444444444445" stroke="#fff" stroke-width="1" />
<rect x="915.2" y="179.24" width="10.8" height="4.41" fill="#fff" stroke="none" stroke-width="1" />
<rect x="899" y="179.44" width="2.8" height="4.01" fill="#fff" stroke="none" stroke-width="1" />
<line x1="893.3" y1="184.25555555555553" x2="951.7" y2="184.25555555555553" stroke="#fff" stroke-width="1" />
<rect x="915.2" y="185.86" width="10.8" height="4.41" fill="#fff" stroke="none" stroke-width="1" />
<rect x="899" y="186.06" width="2.8" height="4.01" fill="#fff" stroke="none" stroke-width="1" />
<line x1="893.3" y1="190.86666666666665" x2="951.7" y2="190.86666666666665" stroke="#fff" stroke-width="1" />
<rect x="915.2" y="192.47" width="17.6" height="4.41" fill="#fff" stroke="none" stroke-width="1" />
<rect x="899" y="192.67" width="2.8" height="4.01" fill="#fff" stroke="none" stroke-width="1" />
<line x1="893.3" y1="197.47777777777776" x2="951.7" y2="197.47777777777776" stroke="#fff" stroke-width="1" />
<rect x="915.2" y="199.08" width="14.6" height="4.41" fill="#fff" stroke="none" stroke-width="1" />
<rect x="899" y="199.28" width="2.8" height="4.01" fill="#fff" stroke="none" stroke-width="1" />
<line x1="893.3" y1="204.08888888888887" x2="951.7" y2="204.08888888888887" stroke="#fff" stroke-width="1" />
<rect x="915.2" y="205.69" width="10.8" height="4.41" fill="#fff" stroke="none" stroke-width="1" />
<rect x="899" y="205.89" width="2.8" height="4.01" fill="#fff" stroke="none" stroke-width="1" />
<text x="723" y="244.2" font-size="8.4" fill="#fff" font-family='"Liberation Serif","Noto Serif CJK SC",serif' font-weight="bold" textLength="67" lengthAdjust="spacingAndGlyphs" stroke="#fff" stroke-width="0.85">制冷机房管道平面布置图</text>
<line x1="720" y1="246" x2="794.6" y2="246" stroke="#fff" stroke-width="1" />
<text x="798" y="242.6" font-size="7.4" fill="#fff" font-family='"Liberation Serif","Noto Serif CJK SC",serif' font-weight="bold" textLength="14" lengthAdjust="spacingAndGlyphs" stroke="#fff" stroke-width="0.65">1:100</text>
<rect x="888.6" y="271.4" width="75.9" height="16.0" fill="#000" stroke="none" stroke-width="1" />
<rect x="892.02" y="274.12" width="22.77" height="3.2" fill="#fff" stroke="none" stroke-width="1" />
<rect x="918.58" y="271.4" width="45.92" height="16.0" fill="#fff" stroke="none" stroke-width="1" />
<rect x="888.6" y="279.88" width="29.98" height="3.2" fill="#fff" stroke="none" stroke-width="1" />
<rect x="888.6" y="284.04" width="29.98" height="3.2" fill="#fff" stroke="none" stroke-width="1" />
<rect x="889.51" y="279.88" width="1.52" height="2.88" fill="#000" stroke="none" stroke-width="1" />
<rect x="891.03" y="281.64" width="1.52" height="1.44" fill="#000" stroke="none" stroke-width="1" />
<rect x="892.74" y="279.88" width="1.52" height="1.76" fill="#000" stroke="none" stroke-width="1" />
<rect x="895.96" y="279.88" width="1.52" height="2.88" fill="#000" stroke="none" stroke-width="1" />
<rect x="899.19" y="279.88" width="1.52" height="1.76" fill="#000" stroke="none" stroke-width="1" />
<rect x="900.71" y="281.64" width="1.52" height="1.44" fill="#000" stroke="none" stroke-width="1" />
<rect x="902.41" y="279.88" width="1.52" height="2.88" fill="#000" stroke="none" stroke-width="1" />
<rect x="905.64" y="279.88" width="1.52" height="1.76" fill="#000" stroke="none" stroke-width="1" />
<rect x="908.87" y="279.88" width="1.52" height="2.88" fill="#000" stroke="none" stroke-width="1" />
<rect x="910.38" y="281.64" width="1.52" height="1.44" fill="#000" stroke="none" stroke-width="1" />
<rect x="912.09" y="279.88" width="1.52" height="1.76" fill="#000" stroke="none" stroke-width="1" />
<rect x="915.32" y="279.88" width="1.52" height="2.88" fill="#000" stroke="none" stroke-width="1" />
<rect x="889.51" y="284.04" width="1.52" height="1.76" fill="#000" stroke="none" stroke-width="1" />
<rect x="892.74" y="284.04" width="1.52" height="2.88" fill="#000" stroke="none" stroke-width="1" />
<rect x="894.25" y="285.8" width="1.52" height="1.44" fill="#000" stroke="none" stroke-width="1" />
<rect x="895.96" y="284.04" width="1.52" height="1.76" fill="#000" stroke="none" stroke-width="1" />
<rect x="899.19" y="284.04" width="1.52" height="2.88" fill="#000" stroke="none" stroke-width="1" />
<rect x="902.41" y="284.04" width="1.52" height="1.76" fill="#000" stroke="none" stroke-width="1" />
<rect x="903.93" y="285.8" width="1.52" height="1.44" fill="#000" stroke="none" stroke-width="1" />
<rect x="905.64" y="284.04" width="1.52" height="2.88" fill="#000" stroke="none" stroke-width="1" />
<rect x="908.87" y="284.04" width="1.52" height="1.76" fill="#000" stroke="none" stroke-width="1" />
<rect x="912.09" y="284.04" width="1.52" height="2.88" fill="#000" stroke="none" stroke-width="1" />
<rect x="913.61" y="285.8" width="1.52" height="1.44" fill="#000" stroke="none" stroke-width="1" />
<rect x="915.32" y="284.04" width="1.52" height="1.76" fill="#000" stroke="none" stroke-width="1" />
<rect x="918.96" y="272.2" width="0.76" height="6.72" fill="#000" stroke="none" stroke-width="1" />
<rect x="920.1" y="274.92" width="1.9" height="4.0" fill="#000" stroke="none" stroke-width="1" />
<rect x="922.75" y="272.04" width="1.52" height="2.56" fill="#000" stroke="none" stroke-width="1" />
<rect x="924.65" y="275.56" width="1.9" height="3.36" fill="#000" stroke="none" stroke-width="1" />
<rect x="927.69" y="272.04" width="1.14" height="6.4" fill="#000" stroke="none" stroke-width="1" />
<rect x="929.21" y="273.0" width="1.14" height="3.2" fill="#000" stroke="none" stroke-width="1" />
<rect x="931.48" y="275.4" width="7.21" height="3.36" fill="#000" stroke="none" stroke-width="1" />
<rect x="940.59" y="275.72" width="1.14" height="2.08" fill="#000" stroke="none" stroke-width="1" />
<rect x="946.28" y="275.72" width="1.14" height="2.08" fill="#000" stroke="none" stroke-width="1" />
<rect x="954.63" y="275.72" width="9.11" height="3.04" fill="#000" stroke="none" stroke-width="1" />
<rect x="934.14" y="272.36" width="1.52" height="1.28" fill="#000" stroke="none" stroke-width="1" />
<rect x="943.25" y="272.2" width="1.52" height="1.12" fill="#000" stroke="none" stroke-width="1" />
<rect x="951.6" y="272.04" width="1.52" height="1.28" fill="#000" stroke="none" stroke-width="1" />
<rect x="918.96" y="279.88" width="0.91" height="3.2" fill="#000" stroke="none" stroke-width="1" />
<rect x="921.24" y="279.88" width="1.52" height="1.44" fill="#000" stroke="none" stroke-width="1" />
<rect x="924.27" y="281.64" width="1.52" height="1.44" fill="#000" stroke="none" stroke-width="1" />
<rect x="927.31" y="279.88" width="1.9" height="1.76" fill="#000" stroke="none" stroke-width="1" />
<rect x="945.9" y="280.36" width="1.14" height="1.92" fill="#000" stroke="none" stroke-width="1" />
<rect x="949.32" y="281.0" width="0.91" height="2.08" fill="#000" stroke="none" stroke-width="1" />
<rect x="952.36" y="280.2" width="1.14" height="1.76" fill="#000" stroke="none" stroke-width="1" />
<rect x="956.15" y="281.0" width="1.14" height="2.08" fill="#000" stroke="none" stroke-width="1" />
<rect x="959.95" y="280.2" width="1.52" height="2.08" fill="#000" stroke="none" stroke-width="1" />
<rect x="918.96" y="284.04" width="0.91" height="3.2" fill="#000" stroke="none" stroke-width="1" />
<rect x="921.24" y="285.48" width="1.14" height="1.76" fill="#000" stroke="none" stroke-width="1" />
<rect x="924.27" y="284.04" width="1.52" height="1.76" fill="#000" stroke="none" stroke-width="1" />
<rect x="928.45" y="284.2" width="9.87" height="2.56" fill="#000" stroke="none" stroke-width="1" />
<rect x="945.52" y="284.52" width="2.28" height="2.08" fill="#000" stroke="none" stroke-width="1" />
<rect x="950.08" y="285.32" width="1.14" height="1.92" fill="#000" stroke="none" stroke-width="1" />
<rect x="953.87" y="284.2" width="1.52" height="1.92" fill="#000" stroke="none" stroke-width="1" />
<rect x="958.43" y="285.16" width="4.17" height="2.08" fill="#000" stroke="none" stroke-width="1" />
<line x1="888.6" y1="279.4" x2="964.5" y2="279.4" stroke="#000" stroke-width="1" />
<line x1="888.6" y1="283.56" x2="964.5" y2="283.56" stroke="#000" stroke-width="1" />
<polyline points="888.6,287.4 888.6,271.4 918.201,271.4 918.201,279.4" stroke="#00ffff" stroke-width="1" fill="none" />
<line x1="918.201" y1="271.4" x2="964.5" y2="271.4" stroke="#bff" stroke-width="1" /></g>
<g id="d3" shape-rendering="crispEdges"><rect x="44.5" y="414.7" width="392.5" height="276.3" fill="none" stroke="#5fdede" stroke-width="1" />
<rect x="56" y="419" width="375.6" height="267.3" fill="none" stroke="#4fe6ea" stroke-width="2" />
<path d="M101,462 V482 q0.5,5 6.4,6" stroke="#fff" stroke-width="1" fill="none" />
<path d="M118,462 V482 q-0.5,5 -5.6,6" stroke="#fff" stroke-width="1" fill="none" />
<path d="M106.2,458 H112 V461.4 H104.4 Z" stroke="none" stroke-width="0" fill="#00ff00" opacity="0.9"/>
<line x1="101" y1="461.79999999999995" x2="113.5" y2="461.79999999999995" stroke="#fff" stroke-width="1" />
<path d="M122.2,458 H129 V461.4 H120.4 Z" stroke="none" stroke-width="0" fill="#00ff00" opacity="0.9"/>
<line x1="118" y1="461.79999999999995" x2="131" y2="461.79999999999995" stroke="#fff" stroke-width="1" />
<rect x="99" y="470.6" width="4" height="3.4" fill="#f01010" stroke="none" stroke-width="1" />
<rect x="116" y="470.6" width="4" height="3.4" fill="#f01010" stroke="none" stroke-width="1" />
<line x1="101" y1="480" x2="101" y2="483.5" stroke="#ffff00" stroke-width="1" />
<line x1="119" y1="475" x2="119" y2="478" stroke="#ffff00" stroke-width="1" />
<rect x="107.4" y="479.4" width="5.0" height="9.6" fill="#fff" stroke="none" stroke-width="1" />
<rect x="105.9" y="485.6" width="8.1" height="3.4" fill="#fff" stroke="none" stroke-width="1" />
<rect x="97" y="488.8" width="24.6" height="2.8" fill="none" stroke="#fff" stroke-width="1" />
<text x="83.8" y="511.8" font-size="14" fill="#fff" font-family='"Liberation Serif","Noto Serif CJK SC",serif' font-weight="bold" textLength="11.8" lengthAdjust="spacingAndGlyphs" stroke="#fff" stroke-width="0.65">1-1</text>
<text x="97.9" y="511.8" font-size="12.6" fill="#fff" font-family='"Liberation Serif","Noto Serif CJK SC",serif' font-weight="bold" textLength="27.1" lengthAdjust="spacingAndGlyphs" stroke="#fff" stroke-width="0.65">剖面图</text>
<text x="127" y="512" font-size="9" fill="#fff" font-family='"Liberation Serif","Noto Serif CJK SC",serif' font-weight="bold" textLength="16.5" lengthAdjust="spacingAndGlyphs" stroke="#fff" stroke-width="0.4">1:100</text>
<line x1="83" y1="514.7" x2="143" y2="514.6" stroke="#fff" stroke-width="1" />
<rect x="183.5" y="489.5" width="59.0" height="2.5" fill="none" stroke="#fff" stroke-width="1" />
<text x="192.2" y="511.8" font-size="14" fill="#fff" font-family='"Liberation Serif","Noto Serif CJK SC",serif' font-weight="bold" textLength="13" lengthAdjust="spacingAndGlyphs" stroke="#fff" stroke-width="0.65">2-2</text>
<text x="206.4" y="511.8" font-size="12.6" fill="#fff" font-family='"Liberation Serif","Noto Serif CJK SC",serif' font-weight="bold" textLength="27.6" lengthAdjust="spacingAndGlyphs" stroke="#fff" stroke-width="0.65">剖面图</text>
<text x="236" y="512" font-size="9" fill="#fff" font-family='"Liberation Serif","Noto Serif CJK SC",serif' font-weight="bold" textLength="16" lengthAdjust="spacingAndGlyphs" stroke="#fff" stroke-width="0.4">1:100</text>
<line x1="190" y1="514.6" x2="252" y2="514.6" stroke="#fff" stroke-width="1" />
<line x1="193.2" y1="455.5" x2="219.2" y2="455.5" stroke="#fff" stroke-width="1" />
<line x1="184.3" y1="460.5" x2="220.4" y2="460.5" stroke="#fff" stroke-width="1" />
<path d="M192.39999999999998,450.3 H197 V453.5 H190.6 Z" stroke="none" stroke-width="0" fill="#00ff00" opacity="0.9"/>
<line x1="188.4" y1="453.9" x2="199" y2="453.9" stroke="#fff" stroke-width="1" />
<path d="M182.2,455.1 H188 V458.4 H180.4 Z" stroke="none" stroke-width="0" fill="#00ff00" opacity="0.9"/>
<line x1="178.2" y1="458.79999999999995" x2="189.6" y2="458.79999999999995" stroke="#fff" stroke-width="1" />
<path d="M247.5,481.5 H252 V484.7 H245.70000000000002 Z" stroke="none" stroke-width="0" fill="#00ff00" opacity="0.9"/>
<line x1="243.9" y1="485.09999999999997" x2="254.8" y2="485.09999999999997" stroke="#fff" stroke-width="1" />
<path d="M246.7,490.4 H252 V493.6 H244.9 Z" stroke="none" stroke-width="0" fill="#00ff00" opacity="0.9"/>
<line x1="243.9" y1="494.0" x2="254.8" y2="494.0" stroke="#fff" stroke-width="1" />
<rect x="206.2" y="453.9" width="4.8" height="3.7" fill="#f01010" stroke="none" stroke-width="1" />
<rect x="201.3" y="459.2" width="4.5" height="3.2" fill="#f01010" stroke="none" stroke-width="1" />
<rect x="230.9" y="467.7" width="4.1" height="3.2" fill="#f01010" stroke="none" stroke-width="1" />
<rect x="226.9" y="485.1" width="3.2" height="3.7" fill="#f01010" stroke="none" stroke-width="1" />
<rect x="239.8" y="494" width="3.2" height="3.7" fill="#f01010" stroke="none" stroke-width="1" />
<rect x="196.2" y="455.5" width="3.5" height="2.5" fill="#fff" stroke="none" stroke-width="1" />
<rect x="196.2" y="459.2" width="3.5" height="3.2" fill="#fff" stroke="none" stroke-width="1" />
<rect x="250" y="494" width="3.2" height="3.7" fill="#fff" stroke="none" stroke-width="1" />
<rect x="222.5" y="450.5" width="3.0" height="3.0" fill="none" stroke="#fff" stroke-width="1" />
<rect x="218.5" y="455.5" width="3.0" height="2.5" fill="none" stroke="#fff" stroke-width="1" />
<polyline points="222.5,451.5 218.5,451.5 218.5,461.5" stroke="#fff" stroke-width="1" fill="none" />
<line x1="221.5" y1="453.5" x2="221.5" y2="466" stroke="#fff" stroke-width="1" />
<line x1="223.5" y1="453.5" x2="223.5" y2="489.5" stroke="#fff" stroke-width="1" />
<polyline points="225.5,455.5 233.5,455.5 233.5,495.5 250.4,495.5" stroke="#fff" stroke-width="1" fill="none" />
<line x1="230.1" y1="486.5" x2="248.3" y2="486.5" stroke="#fff" stroke-width="1" />
<path d="M226,457.2 v6.8 M225,458.5 l3.5,1.5 l-3.5,2 M228.5,459 v3" stroke="#ffff80" stroke-width="1" fill="none" />
<line x1="226.2" y1="482" x2="226.2" y2="485.5" stroke="#ffff80" stroke-width="1" />
<path d="M206,465.5 H229 q2.5,0.5 2.5,3.5 q0,3 -2.5,3.5 H206 q-2.5,-0.5 -2.5,-3.5 q0,-3 2.5,-3.5 Z" stroke="#fff" stroke-width="1" fill="none" />
<line x1="200.9" y1="469.5" x2="231" y2="469.5" stroke="#fff" stroke-width="1" />
<line x1="223.5" y1="465.5" x2="223.5" y2="472.5" stroke="#fff" stroke-width="1" />
<polyline points="201.5,469.5 203.5,468.0" stroke="#fff" stroke-width="1" fill="none" />
<path d="M206,474.5 H229 q2.5,0.5 2.5,3.5 q0,3 -2.5,3.5 H206 q-2.5,-0.5 -2.5,-3.5 q0,-3 2.5,-3.5 Z" stroke="#fff" stroke-width="1" fill="none" />
<line x1="200.9" y1="478.5" x2="231" y2="478.5" stroke="#fff" stroke-width="1" />
<line x1="223.5" y1="474.5" x2="223.5" y2="481.5" stroke="#fff" stroke-width="1" />
<polyline points="201.5,478.5 203.5,477.0" stroke="#fff" stroke-width="1" fill="none" />
<rect x="208.2" y="469.3" width="2.5" height="20.2" fill="#fff" stroke="none" stroke-width="1" />
<rect x="217.5" y="469.3" width="2.9" height="20.2" fill="#fff" stroke="none" stroke-width="1" />
<rect x="208.2" y="469.3" width="12.2" height="2.4" fill="#fff" stroke="none" stroke-width="1" />
<rect x="208.2" y="473" width="12.2" height="1.6" fill="#fff" stroke="none" stroke-width="1" />
<rect x="208.2" y="480.7" width="12.2" height="1.6" fill="#fff" stroke="none" stroke-width="1" />
<line x1="214" y1="471.7" x2="214" y2="489.5" stroke="#fff" stroke-width="1" />
<line x1="216" y1="471.7" x2="216" y2="489.5" stroke="#fff" stroke-width="1" />
<rect x="330.4" y="461" width="50.2" height="32.3" fill="none" stroke="#fff" stroke-width="1" />
<line x1="330.4" y1="477.4" x2="380.6" y2="477.4" stroke="#fff" stroke-width="1" />
<rect x="319.4" y="493.6" width="76.2" height="2.8" fill="none" stroke="#fff" stroke-width="1" />
<text x="315.8" y="511.8" font-size="14" fill="#fff" font-family='"Liberation Serif","Noto Serif CJK SC",serif' font-weight="bold" textLength="14" lengthAdjust="spacingAndGlyphs" stroke="#fff" stroke-width="0.65">3-3</text>
<text x="334.6" y="511.8" font-size="12.6" fill="#fff" font-family='"Liberation Serif","Noto Serif CJK SC",serif' font-weight="bold" textLength="26.6" lengthAdjust="spacingAndGlyphs" stroke="#fff" stroke-width="0.65">剖面图</text>
<text x="362.6" y="512" font-size="9" fill="#fff" font-family='"Liberation Serif","Noto Serif CJK SC",serif' font-weight="bold" textLength="15.6" lengthAdjust="spacingAndGlyphs" stroke="#fff" stroke-width="0.4">1:100</text>
<line x1="314" y1="514.7" x2="379" y2="514.6" stroke="#fff" stroke-width="1" />
<path d="M302.2,446.8 H306.8 V450 H300.4 Z" stroke="none" stroke-width="0" fill="#00ff00" opacity="0.9"/>
<line x1="298.4" y1="450.4" x2="309.4" y2="450.4" stroke="#fff" stroke-width="1" />
<path d="M297.0,452 H301.5 V455.6 H295.2 Z" stroke="none" stroke-width="0" fill="#00ff00" opacity="0.9"/>
<line x1="293" y1="456.0" x2="303.6" y2="456.0" stroke="#fff" stroke-width="1" />
<path d="M317.4,450 H321.5 V453 H315.59999999999997 Z" stroke="none" stroke-width="0" fill="#00ff00" opacity="0.9"/>
<line x1="313.6" y1="453.4" x2="324.6" y2="453.4" stroke="#fff" stroke-width="1" />
<path d="M323.7,455.7 H329.3 V458.8 H321.9 Z" stroke="none" stroke-width="0" fill="#00ff00" opacity="0.9"/>
<line x1="320.8" y1="459.2" x2="332" y2="459.2" stroke="#fff" stroke-width="1" />
<path d="M385.59999999999997,487.7 H390.1 V491.2 H383.79999999999995 Z" stroke="none" stroke-width="0" fill="#00ff00" opacity="0.9"/>
<line x1="382.3" y1="491.59999999999997" x2="392.8" y2="491.59999999999997" stroke="#fff" stroke-width="1" />
<line x1="298.4" y1="457.5" x2="315.7" y2="457.5" stroke="#fff" stroke-width="1" />
<line x1="304.2" y1="452.5" x2="309.4" y2="452.5" stroke="#fff" stroke-width="1" />
<line x1="317.3" y1="460.5" x2="326.7" y2="460.5" stroke="#fff" stroke-width="1" />
<polyline points="309.4,450.5 311.5,455" stroke="#fff" stroke-width="1" fill="none" />
<polyline points="310.4,455 310.4,487.4 322,487.4" stroke="#b844c8" stroke-width="1" fill="none" />
<polyline points="312.4,456 312.4,483 323,483" stroke="#c83020" stroke-width="1" fill="none" />
<polyline points="314.4,457 314.4,471.6 322,471.6" stroke="#40d8d8" stroke-width="1" fill="none" />
<polyline points="316.4,460 316.4,466.6 324,466.6" stroke="#1a1aa4" stroke-width="1" fill="none" />
<path d="M325,464 l3,2.6 l-3,2.6 z" stroke="#ffff00" stroke-width="1" fill="#ffff00" />
<line x1="322" y1="466.6" x2="330.4" y2="466.6" stroke="#ffff00" stroke-width="1" />
<path d="M321,470 q2,3 4,0 q2,3 4,0" stroke="#ffff00" stroke-width="1" fill="none" />
<path d="M322,473 l2,1.5 l2,-1.5" stroke="#40d8d8" stroke-width="1" fill="none" />
<line x1="322.1" y1="481.6" x2="324.9" y2="484.4" stroke="#ffff00" stroke-width="1" />
<line x1="322.1" y1="484.4" x2="324.9" y2="481.6" stroke="#ffff00" stroke-width="1" />
<path d="M325,481 l3,2 l-3,2 z" stroke="#ffff00" stroke-width="1" fill="#ffff00" />
<line x1="326" y1="483" x2="330.4" y2="483" stroke="#f80" stroke-width="1" />
<line x1="320.1" y1="486.0" x2="322.9" y2="488.79999999999995" stroke="#ffff00" stroke-width="1" />
<line x1="320.1" y1="488.79999999999995" x2="322.9" y2="486.0" stroke="#ffff00" stroke-width="1" />
<path d="M323,486 l2.5,1.5 l-2.5,1.5 M326,485.5 q2,2 0,4" stroke="#ffff00" stroke-width="1" fill="none" />
<line x1="326" y1="488" x2="330.4" y2="488" stroke="#f9f" stroke-width="1" />
<rect x="71" y="602.7" width="102" height="2.1" fill="#fff" stroke="none" stroke-width="1" />
<text x="81" y="620.8" font-size="14" fill="#fff" font-family='"Liberation Serif","Noto Serif CJK SC",serif' font-weight="bold" textLength="13.8" lengthAdjust="spacingAndGlyphs" stroke="#fff" stroke-width="0.65">4-4</text>
<text x="100.0" y="620.8" font-size="12.6" fill="#fff" font-family='"Liberation Serif","Noto Serif CJK SC",serif' font-weight="bold" textLength="27" lengthAdjust="spacingAndGlyphs" stroke="#fff" stroke-width="0.65">剖面图</text>
<text x="129" y="620.8" font-size="9" fill="#fff" font-family='"Liberation Serif","Noto Serif CJK SC",serif' font-weight="bold" textLength="16" lengthAdjust="spacingAndGlyphs" stroke="#fff" stroke-width="0.4">1:100</text>
<line x1="79" y1="623.5" x2="145" y2="623.5" stroke="#fff" stroke-width="1" />
<path d="M84.2,589.5 H113.9 Q117.9,590 117.9,593 Q117.9,596 113.9,596.5 H84.2 Q80.2,596 80.2,593 Q80.2,590 84.2,589.5 Z" stroke="#fff" stroke-width="1" fill="none" />
<line x1="83.2" y1="589.5" x2="83.2" y2="596.5" stroke="#fff" stroke-width="1" />
<line x1="114.9" y1="589.5" x2="114.9" y2="596.5" stroke="#fff" stroke-width="1" />
<line x1="76.7" y1="593.5" x2="121.4" y2="593.5" stroke="#fff" stroke-width="1" />
<path d="M128.8,589.5 H158.5 Q162.5,590 162.5,593 Q162.5,596 158.5,596.5 H128.8 Q124.8,596 124.8,593 Q124.8,590 128.8,589.5 Z" stroke="#fff" stroke-width="1" fill="none" />
<line x1="127.8" y1="589.5" x2="127.8" y2="596.5" stroke="#fff" stroke-width="1" />
<line x1="159.5" y1="589.5" x2="159.5" y2="596.5" stroke="#fff" stroke-width="1" />
<line x1="121.3" y1="593.5" x2="166" y2="593.5" stroke="#fff" stroke-width="1" />
<line x1="88.5" y1="596.5" x2="88.5" y2="602.7" stroke="#fff" stroke-width="1" />
<line x1="90.5" y1="596.5" x2="90.5" y2="602.7" stroke="#fff" stroke-width="1" />
<line x1="105.5" y1="596.5" x2="105.5" y2="602.7" stroke="#fff" stroke-width="1" />
<line x1="108.5" y1="596.5" x2="108.5" y2="602.7" stroke="#fff" stroke-width="1" />
<line x1="134.5" y1="596.5" x2="134.5" y2="602.7" stroke="#fff" stroke-width="1" />
<line x1="136.5" y1="596.5" x2="136.5" y2="602.7" stroke="#fff" stroke-width="1" />
<line x1="151.5" y1="596.5" x2="151.5" y2="602.7" stroke="#fff" stroke-width="1" />
<line x1="153.5" y1="596.5" x2="153.5" y2="602.7" stroke="#fff" stroke-width="1" />
<line x1="87" y1="567.5" x2="87" y2="589.5" stroke="#fff" stroke-width="1" />
<path d="M85.6,569.0 L87,566.5 L88.4,569.0" stroke="#fff" stroke-width="1" fill="none" />
<line x1="94.1" y1="567.5" x2="94.1" y2="589.5" stroke="#fff" stroke-width="1" />
<path d="M92.69999999999999,569.0 L94.1,566.5 L95.5,569.0" stroke="#fff" stroke-width="1" fill="none" />
<line x1="101.7" y1="567.5" x2="101.7" y2="589.5" stroke="#fff" stroke-width="1" />
<path d="M100.3,569.0 L101.7,566.5 L103.10000000000001,569.0" stroke="#fff" stroke-width="1" fill="none" />
<line x1="140" y1="569.6" x2="140" y2="589.5" stroke="#fff" stroke-width="1" />
<path d="M138.6,571.1 L140,568.6 L141.4,571.1" stroke="#fff" stroke-width="1" fill="none" />
<line x1="146.7" y1="569.6" x2="146.7" y2="589.5" stroke="#fff" stroke-width="1" />
<path d="M145.29999999999998,571.1 L146.7,568.6 L148.1,571.1" stroke="#fff" stroke-width="1" fill="none" />
<line x1="154.6" y1="569.6" x2="154.6" y2="589.5" stroke="#fff" stroke-width="1" />
<path d="M153.2,571.1 L154.6,568.6 L156.0,571.1" stroke="#fff" stroke-width="1" fill="none" />
<line x1="87.8" y1="567.5" x2="87.8" y2="589.5" stroke="#fff" stroke-width="1" />
<line x1="140.8" y1="569.6" x2="140.8" y2="589.5" stroke="#fff" stroke-width="1" />
<polyline points="87,567 85.5,565 82,565" stroke="#fff" stroke-width="1" fill="none" />
<polyline points="140,569 138.5,568.4 134,568.4" stroke="#fff" stroke-width="1" fill="none" />
<rect x="83.8" y="577.5" width="4.2" height="3.7" fill="#f01010" stroke="none" stroke-width="1" />
<rect x="91.7" y="577.5" width="4.2" height="3.7" fill="#f01010" stroke="none" stroke-width="1" />
<rect x="99" y="577.5" width="4.2" height="3.7" fill="#f01010" stroke="none" stroke-width="1" />
<rect x="137.3" y="577.5" width="4.2" height="3.7" fill="#f01010" stroke="none" stroke-width="1" />
<rect x="144.1" y="577.5" width="4.2" height="3.7" fill="#f01010" stroke="none" stroke-width="1" />
<rect x="152" y="577.5" width="4.2" height="3.7" fill="#f01010" stroke="none" stroke-width="1" />
<line x1="87" y1="583.5" x2="87" y2="586.5" stroke="#ffff80" stroke-width="1" />
<line x1="94.1" y1="583.5" x2="94.1" y2="586.5" stroke="#ffff80" stroke-width="1" />
<line x1="101.7" y1="583.5" x2="101.7" y2="586.5" stroke="#ffff80" stroke-width="1" />
<line x1="140" y1="583.5" x2="140" y2="586.5" stroke="#ffff80" stroke-width="1" />
<line x1="146.7" y1="583.5" x2="146.7" y2="586.5" stroke="#ffff80" stroke-width="1" />
<line x1="154.6" y1="583.5" x2="154.6" y2="586.5" stroke="#ffff80" stroke-width="1" />
<rect x="106.9" y="569.2" width="16.3" height="3.6" fill="#f01010" stroke="none" stroke-width="1" />
<line x1="105.8" y1="573.6" x2="124.2" y2="573.6" stroke="#ffff80" stroke-width="1" />
<path d="M79.2,561.3 H85.4 V564.4 H77.4 Z" stroke="none" stroke-width="0" fill="#00ff00" opacity="0.9"/>
<line x1="76" y1="564.8" x2="87" y2="564.8" stroke="#fff" stroke-width="1" />
<path d="M131.2,565 H137.3 V568.1 H129.4 Z" stroke="none" stroke-width="0" fill="#00ff00" opacity="0.9"/>
<line x1="127.9" y1="568.5" x2="140.5" y2="568.5" stroke="#fff" stroke-width="1" />
<path d="M108.60000000000001,578.3 H114.2 V581.2 H106.80000000000001 Z" stroke="none" stroke-width="0" fill="#00ff00" opacity="0.9"/>
<line x1="104.3" y1="581.6" x2="115.3" y2="581.6" stroke="#fff" stroke-width="1" />
<path d="M72.4,587.5 H77.5 V590.7 H70.60000000000001 Z" stroke="none" stroke-width="0" fill="#00ff00" opacity="0.9"/>
<line x1="69" y1="591.1" x2="79.6" y2="591.1" stroke="#fff" stroke-width="1" />
<rect x="115.8" y="586.5" width="10.0" height="3.1" fill="#00ff00" stroke="none" stroke-width="1" opacity="0.9"/>
<rect x="125.5" y="573.5" width="5.0" height="6.0" fill="none" stroke="#fff" stroke-width="1" />
<rect x="127.4" y="575.8" width="1.4" height="1.4" fill="#fff" stroke="none" stroke-width="1" />
<polyline points="125.5,576.5 120.5,576.5 120.5,582.5 108.5,582.5 108.5,589.5" stroke="#fff" stroke-width="1" fill="none" />
<polyline points="127.5,579.5 127.5,582.5 132.5,582.5 132.5,589.5" stroke="#fff" stroke-width="1" fill="none" />
<line x1="108.5" y1="583.5" x2="132.5" y2="583.5" stroke="#fff" stroke-width="1" />
<line x1="112.5" y1="583.5" x2="112.5" y2="589.5" stroke="#fff" stroke-width="1" />
<rect x="81.7" y="587" width="2.1" height="2.6" fill="#ffff00" stroke="none" stroke-width="1" />
<rect x="112.1" y="586" width="2.1" height="3" fill="#ffff00" stroke="none" stroke-width="1" />
<rect x="128.9" y="586.5" width="1.7" height="2.7" fill="#ffff00" stroke="none" stroke-width="1" />
<rect x="108" y="597" width="1.5" height="4" fill="#ffff00" stroke="none" stroke-width="1" />
<rect x="129" y="597" width="2" height="4" fill="#ffff00" stroke="none" stroke-width="1" />
<line x1="157.8" y1="586.8" x2="159.3" y2="589.4" stroke="#ffff00" stroke-width="1" />
<line x1="202.5" y1="571.5" x2="271" y2="571.5" stroke="#fff" stroke-width="1" />
<line x1="202.5" y1="583.5" x2="271" y2="583.5" stroke="#fff" stroke-width="1" />
<line x1="202.5" y1="571.5" x2="202.5" y2="583.5" stroke="#fff" stroke-width="1" />
<line x1="261.5" y1="571.5" x2="261.5" y2="583.5" stroke="#fff" stroke-width="1" />
<path d="M202.5,571.5 Q197.0,572.5 197.5,577.5 Q197.0,582.5 202.5,583.5" stroke="#fff" stroke-width="1" fill="none" />
<path d="M261.5,571.5 Q266.5,573.5 267.5,577.5 Q266.5,581.5 261.5,583.5" stroke="#fff" stroke-width="1" fill="none" />
<line x1="193.2" y1="577.5" x2="267" y2="577.5" stroke="#fff" stroke-width="1" />
<line x1="270.5" y1="570.5" x2="270.5" y2="584.5" stroke="#fff" stroke-width="1" />
<rect x="267.2" y="576.2" width="2.7" height="4.6" fill="#00ff00" stroke="none" stroke-width="1" />
<rect x="209" y="561" width="9.8" height="1.6" fill="#fff" stroke="none" stroke-width="1" />
<line x1="211.0" y1="562.6" x2="211.0" y2="571.5" stroke="#fff" stroke-width="1" />
<line x1="216.0" y1="562.6" x2="216.0" y2="571.5" stroke="#fff" stroke-width="1" />
<rect x="211.9" y="562.8" width="3.2" height="7.8" fill="#00ff00" stroke="none" stroke-width="1" />
<line x1="213.5" y1="553.5" x2="213.5" y2="561" stroke="#fff" stroke-width="1" />
<line x1="213.5" y1="571.5" x2="213.5" y2="574.8" stroke="#fff" stroke-width="1" />
<line x1="212.5" y1="573.5" x2="215.0" y2="573.5" stroke="#fff" stroke-width="1" />
<rect x="225.3" y="561" width="7.7" height="1.6" fill="#fff" stroke="none" stroke-width="1" />
<line x1="227.0" y1="562.6" x2="227.0" y2="571.5" stroke="#fff" stroke-width="1" />
<line x1="232.0" y1="562.6" x2="232.0" y2="571.5" stroke="#fff" stroke-width="1" />
<rect x="227.9" y="562.8" width="3.2" height="7.8" fill="#00ff00" stroke="none" stroke-width="1" />
<line x1="229.5" y1="553.5" x2="229.5" y2="561" stroke="#fff" stroke-width="1" />
<line x1="229.5" y1="571.5" x2="229.5" y2="574.8" stroke="#fff" stroke-width="1" />
<line x1="228.5" y1="573.5" x2="231.0" y2="573.5" stroke="#fff" stroke-width="1" />
<rect x="237.8" y="561" width="8.9" height="1.6" fill="#fff" stroke="none" stroke-width="1" />
<line x1="240.0" y1="562.6" x2="240.0" y2="571.5" stroke="#fff" stroke-width="1" />
<line x1="245.0" y1="562.6" x2="245.0" y2="571.5" stroke="#fff" stroke-width="1" />
<rect x="240.9" y="562.8" width="3.2" height="7.8" fill="#00ff00" stroke="none" stroke-width="1" />
<line x1="242.5" y1="553.5" x2="242.5" y2="561" stroke="#fff" stroke-width="1" />
<line x1="242.5" y1="571.5" x2="242.5" y2="574.8" stroke="#fff" stroke-width="1" />
<line x1="241.5" y1="573.5" x2="244.0" y2="573.5" stroke="#fff" stroke-width="1" />
<rect x="248.3" y="561" width="8.2" height="1.6" fill="#fff" stroke="none" stroke-width="1" />
<line x1="250.0" y1="562.6" x2="250.0" y2="571.5" stroke="#fff" stroke-width="1" />
<line x1="255.0" y1="562.6" x2="255.0" y2="571.5" stroke="#fff" stroke-width="1" />
<rect x="250.9" y="562.8" width="3.2" height="7.8" fill="#00ff00" stroke="none" stroke-width="1" />
<line x1="252.5" y1="553.5" x2="252.5" y2="561" stroke="#fff" stroke-width="1" />
<line x1="252.5" y1="571.5" x2="252.5" y2="574.8" stroke="#fff" stroke-width="1" />
<line x1="251.5" y1="573.5" x2="254.0" y2="573.5" stroke="#fff" stroke-width="1" />
<line x1="202.2" y1="555.5" x2="261.3" y2="555.5" stroke="#fff" stroke-width="1" />
<line x1="202.5" y1="555.5" x2="202.5" y2="561.5" stroke="#fff" stroke-width="1" />
<line x1="204.5" y1="555.5" x2="204.5" y2="561.5" stroke="#fff" stroke-width="1" />
<line x1="257.5" y1="555.5" x2="257.5" y2="561.5" stroke="#fff" stroke-width="1" />
<line x1="260.5" y1="555.5" x2="260.5" y2="561.5" stroke="#fff" stroke-width="1" />
<rect x="201" y="552" width="3.2" height="2.8" fill="#00ff00" stroke="none" stroke-width="1" />
<rect x="207.4" y="552" width="3.3" height="2.8" fill="#00ff00" stroke="none" stroke-width="1" />
<rect x="218" y="552" width="4" height="2.8" fill="#00ff00" stroke="none" stroke-width="1" />
<rect x="232.1" y="552" width="4.9" height="2.8" fill="#00ff00" stroke="none" stroke-width="1" />
<rect x="243.9" y="552" width="4.1" height="2.8" fill="#00ff00" stroke="none" stroke-width="1" />
<rect x="252.4" y="552" width="8.6" height="2.8" fill="#00ff00" stroke="none" stroke-width="1" />
<rect x="203.4" y="566" width="2.5" height="4.2" fill="#ffff00" stroke="none" stroke-width="1" />
<path d="M260.40000000000003,561.4 L255.4,565.8 M255.4,563.4 L258.8,566.4 M257.8,566 V570.6" stroke="#ffff00" stroke-width="1" fill="none" />
<line x1="202.2" y1="585.9" x2="202.2" y2="597" stroke="#fff" stroke-width="1" />
<line x1="260.5" y1="585.9" x2="260.5" y2="597" stroke="#fff" stroke-width="1" />
<line x1="202.2" y1="595.5" x2="260.5" y2="595.5" stroke="#fff" stroke-width="1" />
<rect x="226" y="592" width="5.7" height="3.2" fill="#00ff00" stroke="none" stroke-width="1" />
<rect x="246.4" y="581" width="1.6" height="12.6" fill="#fff" stroke="none" stroke-width="1" />
<line x1="245.7" y1="588.5" x2="249.2" y2="588.5" stroke="#fff" stroke-width="1" />
<rect x="243.1" y="583.9" width="2.9" height="5.0" fill="#00ff00" stroke="none" stroke-width="1" />
<line x1="247.2" y1="591.5" x2="260.5" y2="591.5" stroke="#fff" stroke-width="1" />
<rect x="250.4" y="589.2" width="4.4" height="2.3" fill="#00ff00" stroke="none" stroke-width="1" />
<text x="194" y="620.7" font-size="12.8" fill="#fff" font-family='"Liberation Serif","Noto Serif CJK SC",serif' font-weight="bold" textLength="55" lengthAdjust="spacingAndGlyphs" stroke="#fff" stroke-width="0.65">集水器大样图</text>
<text x="252" y="620.8" font-size="9" fill="#fff" font-family='"Liberation Serif","Noto Serif CJK SC",serif' font-weight="bold" textLength="17" lengthAdjust="spacingAndGlyphs" stroke="#fff" stroke-width="0.4">1:100</text>
<line x1="189" y1="623.5" x2="270" y2="623.5" stroke="#fff" stroke-width="1" />
<line x1="319.5" y1="571.5" x2="390.7" y2="571.5" stroke="#fff" stroke-width="1" />
<line x1="319.5" y1="583.5" x2="390.7" y2="583.5" stroke="#fff" stroke-width="1" />
<line x1="319.5" y1="571.5" x2="319.5" y2="583.5" stroke="#fff" stroke-width="1" />
<line x1="377.5" y1="571.5" x2="377.5" y2="583.5" stroke="#fff" stroke-width="1" />
<path d="M319.5,571.5 Q314.0,572.5 314.5,577.5 Q314.0,582.5 319.5,583.5" stroke="#fff" stroke-width="1" fill="none" />
<path d="M377.5,571.5 Q382.5,573.5 383.5,577.5 Q382.5,581.5 377.5,583.5" stroke="#fff" stroke-width="1" fill="none" />
<line x1="311.2" y1="577.5" x2="385.8" y2="577.5" stroke="#fff" stroke-width="1" />
<line x1="390.5" y1="570.5" x2="390.5" y2="584.5" stroke="#fff" stroke-width="1" />
<rect x="387.2" y="576.2" width="2.7" height="4.6" fill="#00ff00" stroke="none" stroke-width="1" />
<rect x="323.8" y="561" width="7.7" height="1.6" fill="#fff" stroke="none" stroke-width="1" />
<line x1="325.0" y1="562.6" x2="325.0" y2="571.5" stroke="#fff" stroke-width="1" />
<line x1="330.0" y1="562.6" x2="330.0" y2="571.5" stroke="#fff" stroke-width="1" />
<rect x="325.9" y="562.8" width="3.2" height="7.8" fill="#00ff00" stroke="none" stroke-width="1" />
<line x1="327.5" y1="553.5" x2="327.5" y2="561" stroke="#fff" stroke-width="1" />
<line x1="327.5" y1="571.5" x2="327.5" y2="574.8" stroke="#fff" stroke-width="1" />
<line x1="326.5" y1="573.5" x2="329.0" y2="573.5" stroke="#fff" stroke-width="1" />
<rect x="336.4" y="561" width="7.3" height="1.6" fill="#fff" stroke="none" stroke-width="1" />
<line x1="337.0" y1="562.6" x2="337.0" y2="571.5" stroke="#fff" stroke-width="1" />
<line x1="342.0" y1="562.6" x2="342.0" y2="571.5" stroke="#fff" stroke-width="1" />
<rect x="337.9" y="562.8" width="3.2" height="7.8" fill="#00ff00" stroke="none" stroke-width="1" />
<line x1="339.5" y1="553.5" x2="339.5" y2="561" stroke="#fff" stroke-width="1" />
<line x1="339.5" y1="571.5" x2="339.5" y2="574.8" stroke="#fff" stroke-width="1" />
<line x1="338.5" y1="573.5" x2="341.0" y2="573.5" stroke="#fff" stroke-width="1" />
<rect x="349.3" y="561" width="7.3" height="1.6" fill="#fff" stroke="none" stroke-width="1" />
<line x1="351.0" y1="562.6" x2="351.0" y2="571.5" stroke="#fff" stroke-width="1" />
<line x1="356.0" y1="562.6" x2="356.0" y2="571.5" stroke="#fff" stroke-width="1" />
<rect x="351.9" y="562.8" width="3.2" height="7.8" fill="#00ff00" stroke="none" stroke-width="1" />
<line x1="353.5" y1="553.5" x2="353.5" y2="561" stroke="#fff" stroke-width="1" />
<line x1="353.5" y1="571.5" x2="353.5" y2="574.8" stroke="#fff" stroke-width="1" />
<line x1="352.5" y1="573.5" x2="355.0" y2="573.5" stroke="#fff" stroke-width="1" />
<rect x="361.5" y="561" width="9.3" height="1.6" fill="#fff" stroke="none" stroke-width="1" />
<line x1="364.0" y1="562.6" x2="364.0" y2="571.5" stroke="#fff" stroke-width="1" />
<line x1="369.0" y1="562.6" x2="369.0" y2="571.5" stroke="#fff" stroke-width="1" />
<rect x="364.9" y="562.8" width="3.2" height="7.8" fill="#00ff00" stroke="none" stroke-width="1" />
<line x1="366.5" y1="553.5" x2="366.5" y2="561" stroke="#fff" stroke-width="1" />
<line x1="366.5" y1="571.5" x2="366.5" y2="574.8" stroke="#fff" stroke-width="1" />
<line x1="365.5" y1="573.5" x2="368.0" y2="573.5" stroke="#fff" stroke-width="1" />
<line x1="319.3" y1="555.5" x2="379" y2="555.5" stroke="#fff" stroke-width="1" />
<line x1="319.5" y1="555.5" x2="319.5" y2="561.5" stroke="#fff" stroke-width="1" />
<line x1="322.5" y1="555.5" x2="322.5" y2="561.5" stroke="#fff" stroke-width="1" />
<line x1="375.5" y1="555.5" x2="375.5" y2="561.5" stroke="#fff" stroke-width="1" />
<line x1="377.5" y1="555.5" x2="377.5" y2="561.5" stroke="#fff" stroke-width="1" />
<rect x="319" y="552" width="8.9" height="2.8" fill="#00ff00" stroke="none" stroke-width="1" />
<rect x="330.3" y="552" width="3.7" height="2.8" fill="#00ff00" stroke="none" stroke-width="1" />
<rect x="342.8" y="552" width="4.1" height="2.8" fill="#00ff00" stroke="none" stroke-width="1" />
<rect x="356.2" y="552" width="4.8" height="2.8" fill="#00ff00" stroke="none" stroke-width="1" />
<rect x="369.2" y="552" width="3.6" height="2.8" fill="#00ff00" stroke="none" stroke-width="1" />
<rect x="374.5" y="552" width="4.5" height="2.8" fill="#00ff00" stroke="none" stroke-width="1" />
<rect x="374" y="566" width="3" height="4.2" fill="#ffff00" stroke="none" stroke-width="1" />
<path d="M320.40000000000003,561 L325.2,565.5 M325.40000000000003,563.2 L321.8,566.2 M322.8,565.8 V570.6" stroke="#ffff00" stroke-width="1" fill="none" />
<line x1="319.2" y1="585.9" x2="319.2" y2="597" stroke="#fff" stroke-width="1" />
<line x1="377.8" y1="585.9" x2="377.8" y2="597" stroke="#fff" stroke-width="1" />
<line x1="319.2" y1="595.5" x2="377.8" y2="595.5" stroke="#fff" stroke-width="1" />
<rect x="344" y="592" width="5.7" height="3.2" fill="#00ff00" stroke="none" stroke-width="1" />
<rect x="331.8" y="581" width="1.6" height="12.6" fill="#fff" stroke="none" stroke-width="1" />
<line x1="331.1" y1="588.5" x2="334.6" y2="588.5" stroke="#fff" stroke-width="1" />
<rect x="329" y="583.9" width="3" height="5.0" fill="#00ff00" stroke="none" stroke-width="1" />
<line x1="319.5" y1="591.5" x2="332.6" y2="591.5" stroke="#fff" stroke-width="1" />
<rect x="323" y="589.2" width="4" height="2.3" fill="#00ff00" stroke="none" stroke-width="1" />
<text x="312" y="620.7" font-size="12.8" fill="#fff" font-family='"Liberation Serif","Noto Serif CJK SC",serif' font-weight="bold" textLength="55" lengthAdjust="spacingAndGlyphs" stroke="#fff" stroke-width="0.65">分水器大样图</text>
<text x="369" y="620.8" font-size="9" fill="#fff" font-family='"Liberation Serif","Noto Serif CJK SC",serif' font-weight="bold" textLength="16.6" lengthAdjust="spacingAndGlyphs" stroke="#fff" stroke-width="0.4">1:100</text>
<line x1="309" y1="623.5" x2="385.6" y2="623.5" stroke="#fff" stroke-width="1" />
<rect x="355.4" y="669.6" width="75.6" height="15.8" fill="#000" stroke="none" stroke-width="1" />
<rect x="358.8" y="672.29" width="22.68" height="3.16" fill="#fff" stroke="none" stroke-width="1" />
<rect x="385.26" y="669.6" width="45.74" height="15.8" fill="#fff" stroke="none" stroke-width="1" />
<rect x="355.4" y="677.97" width="29.86" height="3.16" fill="#fff" stroke="none" stroke-width="1" />
<rect x="355.4" y="682.08" width="29.86" height="3.16" fill="#fff" stroke="none" stroke-width="1" />
<rect x="356.31" y="677.97" width="1.51" height="2.84" fill="#000" stroke="none" stroke-width="1" />
<rect x="357.82" y="679.71" width="1.51" height="1.42" fill="#000" stroke="none" stroke-width="1" />
<rect x="359.52" y="677.97" width="1.51" height="1.74" fill="#000" stroke="none" stroke-width="1" />
<rect x="362.73" y="677.97" width="1.51" height="2.84" fill="#000" stroke="none" stroke-width="1" />
<rect x="365.95" y="677.97" width="1.51" height="1.74" fill="#000" stroke="none" stroke-width="1" />
<rect x="367.46" y="679.71" width="1.51" height="1.42" fill="#000" stroke="none" stroke-width="1" />
<rect x="369.16" y="677.97" width="1.51" height="2.84" fill="#000" stroke="none" stroke-width="1" />
<rect x="372.37" y="677.97" width="1.51" height="1.74" fill="#000" stroke="none" stroke-width="1" />
<rect x="375.59" y="677.97" width="1.51" height="2.84" fill="#000" stroke="none" stroke-width="1" />
<rect x="377.1" y="679.71" width="1.51" height="1.42" fill="#000" stroke="none" stroke-width="1" />
<rect x="378.8" y="677.97" width="1.51" height="1.74" fill="#000" stroke="none" stroke-width="1" />
<rect x="382.01" y="677.97" width="1.51" height="2.84" fill="#000" stroke="none" stroke-width="1" />
<rect x="356.31" y="682.08" width="1.51" height="1.74" fill="#000" stroke="none" stroke-width="1" />
<rect x="359.52" y="682.08" width="1.51" height="2.84" fill="#000" stroke="none" stroke-width="1" />
<rect x="361.03" y="683.82" width="1.51" height="1.42" fill="#000" stroke="none" stroke-width="1" />
<rect x="362.73" y="682.08" width="1.51" height="1.74" fill="#000" stroke="none" stroke-width="1" />
<rect x="365.95" y="682.08" width="1.51" height="2.84" fill="#000" stroke="none" stroke-width="1" />
<rect x="369.16" y="682.08" width="1.51" height="1.74" fill="#000" stroke="none" stroke-width="1" />
<rect x="370.67" y="683.82" width="1.51" height="1.42" fill="#000" stroke="none" stroke-width="1" />
<rect x="372.37" y="682.08" width="1.51" height="2.84" fill="#000" stroke="none" stroke-width="1" />
<rect x="375.59" y="682.08" width="1.51" height="1.74" fill="#000" stroke="none" stroke-width="1" />
<rect x="378.8" y="682.08" width="1.51" height="2.84" fill="#000" stroke="none" stroke-width="1" />
<rect x="380.31" y="683.82" width="1.51" height="1.42" fill="#000" stroke="none" stroke-width="1" />
<rect x="382.01" y="682.08" width="1.51" height="1.74" fill="#000" stroke="none" stroke-width="1" />
<rect x="385.64" y="670.39" width="0.76" height="6.64" fill="#000" stroke="none" stroke-width="1" />
<rect x="386.77" y="673.08" width="1.89" height="3.95" fill="#000" stroke="none" stroke-width="1" />
<rect x="389.42" y="670.23" width="1.51" height="2.53" fill="#000" stroke="none" stroke-width="1" />
<rect x="391.31" y="673.71" width="1.89" height="3.32" fill="#000" stroke="none" stroke-width="1" />
<rect x="394.33" y="670.23" width="1.13" height="6.32" fill="#000" stroke="none" stroke-width="1" />
<rect x="395.85" y="671.18" width="1.13" height="3.16" fill="#000" stroke="none" stroke-width="1" />
<rect x="398.11" y="673.55" width="7.18" height="3.32" fill="#000" stroke="none" stroke-width="1" />
<rect x="407.19" y="673.87" width="1.13" height="2.05" fill="#000" stroke="none" stroke-width="1" />
<rect x="412.86" y="673.87" width="1.13" height="2.05" fill="#000" stroke="none" stroke-width="1" />
<rect x="421.17" y="673.87" width="9.07" height="3.0" fill="#000" stroke="none" stroke-width="1" />
<rect x="400.76" y="670.55" width="1.51" height="1.26" fill="#000" stroke="none" stroke-width="1" />
<rect x="409.83" y="670.39" width="1.51" height="1.11" fill="#000" stroke="none" stroke-width="1" />
<rect x="418.15" y="670.23" width="1.51" height="1.26" fill="#000" stroke="none" stroke-width="1" />
<rect x="385.64" y="677.97" width="0.91" height="3.16" fill="#000" stroke="none" stroke-width="1" />
<rect x="387.91" y="677.97" width="1.51" height="1.42" fill="#000" stroke="none" stroke-width="1" />
<rect x="390.93" y="679.71" width="1.51" height="1.42" fill="#000" stroke="none" stroke-width="1" />
<rect x="393.96" y="677.97" width="1.89" height="1.74" fill="#000" stroke="none" stroke-width="1" />
<rect x="412.48" y="678.45" width="1.13" height="1.9" fill="#000" stroke="none" stroke-width="1" />
<rect x="415.88" y="679.08" width="0.91" height="2.05" fill="#000" stroke="none" stroke-width="1" />
<rect x="418.9" y="678.29" width="1.13" height="1.74" fill="#000" stroke="none" stroke-width="1" />
<rect x="422.68" y="679.08" width="1.13" height="2.05" fill="#000" stroke="none" stroke-width="1" />
<rect x="426.46" y="678.29" width="1.51" height="2.05" fill="#000" stroke="none" stroke-width="1" />
<rect x="385.64" y="682.08" width="0.91" height="3.16" fill="#000" stroke="none" stroke-width="1" />
<rect x="387.91" y="683.5" width="1.13" height="1.74" fill="#000" stroke="none" stroke-width="1" />
<rect x="390.93" y="682.08" width="1.51" height="1.74" fill="#000" stroke="none" stroke-width="1" />
<rect x="395.09" y="682.24" width="9.83" height="2.53" fill="#000" stroke="none" stroke-width="1" />
<rect x="412.1" y="682.56" width="2.27" height="2.05" fill="#000" stroke="none" stroke-width="1" />
<rect x="416.64" y="683.35" width="1.13" height="1.9" fill="#000" stroke="none" stroke-width="1" />
<rect x="420.42" y="682.24" width="1.51" height="1.9" fill="#000" stroke="none" stroke-width="1" />
<rect x="424.95" y="683.19" width="4.16" height="2.05" fill="#000" stroke="none" stroke-width="1" />
<line x1="355.4" y1="677.5" x2="431" y2="677.5" stroke="#000" stroke-width="1" />
<line x1="355.4" y1="681.608" x2="431" y2="681.608" stroke="#000" stroke-width="1" />
<polyline points="355.4,685.4 355.4,669.6 384.884,669.6 384.884,677.5" stroke="#00ffff" stroke-width="1" fill="none" />
<line x1="384.884" y1="669.6" x2="431" y2="669.6" stroke="#bff" stroke-width="1" /></g>
<g id="d4" shape-rendering="crispEdges"><rect x="656.4" y="462.4" width="139.4" height="195.6" fill="none" stroke="#fff" stroke-width="1" />
<rect x="659" y="474.6" width="134.4" height="180.0" fill="none" stroke="#fff" stroke-width="1" />
<rect x="716.4" y="474.6" width="77.0" height="16.7" fill="#000" stroke="none" stroke-width="1" />
<rect x="719.87" y="477.44" width="23.1" height="3.34" fill="#fff" stroke="none" stroke-width="1" />
<rect x="746.81" y="474.6" width="46.59" height="16.7" fill="#fff" stroke="none" stroke-width="1" />
<rect x="716.4" y="483.45" width="30.41" height="3.34" fill="#fff" stroke="none" stroke-width="1" />
<rect x="716.4" y="487.79" width="30.41" height="3.34" fill="#fff" stroke="none" stroke-width="1" />
<rect x="717.32" y="483.45" width="1.54" height="3.01" fill="#000" stroke="none" stroke-width="1" />
<rect x="718.86" y="485.29" width="1.54" height="1.5" fill="#000" stroke="none" stroke-width="1" />
<rect x="720.6" y="483.45" width="1.54" height="1.84" fill="#000" stroke="none" stroke-width="1" />
<rect x="723.87" y="483.45" width="1.54" height="3.01" fill="#000" stroke="none" stroke-width="1" />
<rect x="727.14" y="483.45" width="1.54" height="1.84" fill="#000" stroke="none" stroke-width="1" />
<rect x="728.68" y="485.29" width="1.54" height="1.5" fill="#000" stroke="none" stroke-width="1" />
<rect x="730.41" y="483.45" width="1.54" height="3.01" fill="#000" stroke="none" stroke-width="1" />
<rect x="733.69" y="483.45" width="1.54" height="1.84" fill="#000" stroke="none" stroke-width="1" />
<rect x="736.96" y="483.45" width="1.54" height="3.01" fill="#000" stroke="none" stroke-width="1" />
<rect x="738.5" y="485.29" width="1.54" height="1.5" fill="#000" stroke="none" stroke-width="1" />
<rect x="740.23" y="483.45" width="1.54" height="1.84" fill="#000" stroke="none" stroke-width="1" />
<rect x="743.5" y="483.45" width="1.54" height="3.01" fill="#000" stroke="none" stroke-width="1" />
<rect x="717.32" y="487.79" width="1.54" height="1.84" fill="#000" stroke="none" stroke-width="1" />
<rect x="720.6" y="487.79" width="1.54" height="3.01" fill="#000" stroke="none" stroke-width="1" />
<rect x="722.14" y="489.63" width="1.54" height="1.5" fill="#000" stroke="none" stroke-width="1" />
<rect x="723.87" y="487.79" width="1.54" height="1.84" fill="#000" stroke="none" stroke-width="1" />
<rect x="727.14" y="487.79" width="1.54" height="3.01" fill="#000" stroke="none" stroke-width="1" />
<rect x="730.41" y="487.79" width="1.54" height="1.84" fill="#000" stroke="none" stroke-width="1" />
<rect x="731.95" y="489.63" width="1.54" height="1.5" fill="#000" stroke="none" stroke-width="1" />
<rect x="733.69" y="487.79" width="1.54" height="3.01" fill="#000" stroke="none" stroke-width="1" />
<rect x="736.96" y="487.79" width="1.54" height="1.84" fill="#000" stroke="none" stroke-width="1" />
<rect x="740.23" y="487.79" width="1.54" height="3.01" fill="#000" stroke="none" stroke-width="1" />
<rect x="741.77" y="489.63" width="1.54" height="1.5" fill="#000" stroke="none" stroke-width="1" />
<rect x="743.5" y="487.79" width="1.54" height="1.84" fill="#000" stroke="none" stroke-width="1" />
<rect x="747.2" y="475.44" width="0.77" height="7.01" fill="#000" stroke="none" stroke-width="1" />
<rect x="748.36" y="478.27" width="1.92" height="4.18" fill="#000" stroke="none" stroke-width="1" />
<rect x="751.05" y="475.27" width="1.54" height="2.67" fill="#000" stroke="none" stroke-width="1" />
<rect x="752.98" y="478.94" width="1.92" height="3.51" fill="#000" stroke="none" stroke-width="1" />
<rect x="756.05" y="475.27" width="1.16" height="6.68" fill="#000" stroke="none" stroke-width="1" />
<rect x="757.6" y="476.27" width="1.15" height="3.34" fill="#000" stroke="none" stroke-width="1" />
<rect x="759.9" y="478.78" width="7.32" height="3.51" fill="#000" stroke="none" stroke-width="1" />
<rect x="769.14" y="479.11" width="1.15" height="2.17" fill="#000" stroke="none" stroke-width="1" />
<rect x="774.92" y="479.11" width="1.15" height="2.17" fill="#000" stroke="none" stroke-width="1" />
<rect x="783.39" y="479.11" width="9.24" height="3.17" fill="#000" stroke="none" stroke-width="1" />
<rect x="762.6" y="475.6" width="1.54" height="1.34" fill="#000" stroke="none" stroke-width="1" />
<rect x="771.84" y="475.44" width="1.54" height="1.17" fill="#000" stroke="none" stroke-width="1" />
<rect x="780.31" y="475.27" width="1.54" height="1.34" fill="#000" stroke="none" stroke-width="1" />
<rect x="747.2" y="483.45" width="0.92" height="3.34" fill="#000" stroke="none" stroke-width="1" />
<rect x="749.51" y="483.45" width="1.54" height="1.5" fill="#000" stroke="none" stroke-width="1" />
<rect x="752.59" y="485.29" width="1.54" height="1.5" fill="#000" stroke="none" stroke-width="1" />
<rect x="755.67" y="483.45" width="1.93" height="1.84" fill="#000" stroke="none" stroke-width="1" />
<rect x="774.53" y="483.95" width="1.15" height="2.0" fill="#000" stroke="none" stroke-width="1" />
<rect x="778.0" y="484.62" width="0.92" height="2.17" fill="#000" stroke="none" stroke-width="1" />
<rect x="781.08" y="483.79" width="1.16" height="1.84" fill="#000" stroke="none" stroke-width="1" />
<rect x="784.93" y="484.62" width="1.16" height="2.17" fill="#000" stroke="none" stroke-width="1" />
<rect x="788.78" y="483.79" width="1.54" height="2.17" fill="#000" stroke="none" stroke-width="1" />
<rect x="747.2" y="487.79" width="0.92" height="3.34" fill="#000" stroke="none" stroke-width="1" />
<rect x="749.51" y="489.3" width="1.15" height="1.84" fill="#000" stroke="none" stroke-width="1" />
<rect x="752.59" y="487.79" width="1.54" height="1.84" fill="#000" stroke="none" stroke-width="1" />
<rect x="756.82" y="487.96" width="10.01" height="2.67" fill="#000" stroke="none" stroke-width="1" />
<rect x="774.15" y="488.29" width="2.31" height="2.17" fill="#000" stroke="none" stroke-width="1" />
<rect x="778.77" y="489.13" width="1.15" height="2.0" fill="#000" stroke="none" stroke-width="1" />
<rect x="782.62" y="487.96" width="1.54" height="2.0" fill="#000" stroke="none" stroke-width="1" />
<rect x="787.24" y="488.96" width="4.24" height="2.17" fill="#000" stroke="none" stroke-width="1" />
<line x1="716.4" y1="482.95000000000005" x2="793.4" y2="482.95000000000005" stroke="#000" stroke-width="1" />
<line x1="716.4" y1="487.29200000000003" x2="793.4" y2="487.29200000000003" stroke="#000" stroke-width="1" />
<polyline points="716.4,491.3 716.4,474.6 746.43,474.6 746.43,482.95000000000005" stroke="#00ffff" stroke-width="1" fill="none" />
<line x1="746.43" y1="474.6" x2="793.4" y2="474.6" stroke="#bff" stroke-width="1" />
<rect x="716.5" y="474.5" width="77.0" height="17.0" fill="none" stroke="#30f0f0" stroke-width="1" />
<text x="708.2" y="505.8" font-size="10.4" fill="#fff" font-family='"Liberation Serif","Noto Serif CJK SC",serif' font-weight="bold" textLength="44.8" lengthAdjust="spacingAndGlyphs" stroke="#fff" stroke-width="0.55">空调图纸目录</text>
<line x1="705" y1="507.7" x2="755" y2="507.7" stroke="#fff" stroke-width="1" />
<text x="673" y="523.6" font-size="5.6" fill="#fff" font-family='"Liberation Serif","Noto Serif CJK SC",serif' font-weight="bold" textLength="10.4" lengthAdjust="spacingAndGlyphs" stroke="#fff" stroke-width="0.4">序号</text>
<text x="690.5" y="523.6" font-size="5.6" fill="#fff" font-family='"Liberation Serif","Noto Serif CJK SC",serif' font-weight="bold" textLength="10.4" lengthAdjust="spacingAndGlyphs" stroke="#fff" stroke-width="0.4">图号</text>
<text x="721" y="523.6" font-size="5.6" fill="#fff" font-family='"Liberation Serif","Noto Serif CJK SC",serif' font-weight="bold" textLength="21.5" lengthAdjust="spacingAndGlyphs" stroke="#fff" stroke-width="0.4">图纸名称</text>
<text x="768.6" y="523.6" font-size="5.6" fill="#fff" font-family='"Liberation Serif","Noto Serif CJK SC",serif' font-weight="bold" textLength="9.4" lengthAdjust="spacingAndGlyphs" stroke="#fff" stroke-width="0.4">备注</text>
<rect x="713" y="528.2" width="40.7" height="5.17" fill="#fff" stroke="none" stroke-width="1" />
<text x="677.2" y="532.86875" font-size="6.5" fill="#fff" font-family='"Liberation Serif","Noto Serif CJK SC",serif' font-weight="bold" textLength="2.6" lengthAdjust="spacingAndGlyphs" stroke="#fff" stroke-width="0.4">1</text>
<rect x="689.3" y="528.2" width="3.7" height="5.17" fill="#fff" stroke="none" stroke-width="1" />
<rect x="770" y="528.2" width="3.7" height="5.17" fill="#fff" stroke="none" stroke-width="1" />
<rect x="713" y="535.67" width="33" height="5.17" fill="#fff" stroke="none" stroke-width="1" />
<text x="677.2" y="540.3375" font-size="6.5" fill="#fff" font-family='"Liberation Serif","Noto Serif CJK SC",serif' font-weight="bold" textLength="2.6" lengthAdjust="spacingAndGlyphs" stroke="#fff" stroke-width="0.4">2</text>
<rect x="689.3" y="535.67" width="3.7" height="5.17" fill="#fff" stroke="none" stroke-width="1" />
<rect x="770" y="535.67" width="3.7" height="5.17" fill="#fff" stroke="none" stroke-width="1" />
<rect x="713" y="543.14" width="33" height="5.17" fill="#fff" stroke="none" stroke-width="1" />
<text x="677.2" y="547.80625" font-size="6.5" fill="#fff" font-family='"Liberation Serif","Noto Serif CJK SC",serif' font-weight="bold" textLength="2.6" lengthAdjust="spacingAndGlyphs" stroke="#fff" stroke-width="0.4">3</text>
<rect x="689.3" y="543.14" width="3.7" height="5.17" fill="#fff" stroke="none" stroke-width="1" />
<rect x="770" y="543.14" width="3.7" height="5.17" fill="#fff" stroke="none" stroke-width="1" />
<rect x="713" y="550.61" width="40.7" height="5.17" fill="#fff" stroke="none" stroke-width="1" />
<text x="677.2" y="555.275" font-size="6.5" fill="#fff" font-family='"Liberation Serif","Noto Serif CJK SC",serif' font-weight="bold" textLength="2.6" lengthAdjust="spacingAndGlyphs" stroke="#fff" stroke-width="0.4">4</text>
<rect x="689.3" y="550.61" width="3.7" height="5.17" fill="#fff" stroke="none" stroke-width="1" />
<rect x="770" y="550.61" width="3.7" height="5.17" fill="#fff" stroke="none" stroke-width="1" />
<rect x="713" y="558.68" width="48.9" height="4.37" fill="#fff" stroke="none" stroke-width="1" opacity="0.55"/>
<text x="713" y="562.6437500000001" font-size="5.2" fill="#fff" font-family='"Liberation Serif","Noto Serif CJK SC",serif' font-weight="bold" textLength="48.9" lengthAdjust="spacingAndGlyphs" stroke="#fff" stroke-width="0.35">水—空调机房工艺流程图</text>
<text x="677.2" y="562.74375" font-size="6.5" fill="#fff" font-family='"Liberation Serif","Noto Serif CJK SC",serif' font-weight="bold" textLength="2.6" lengthAdjust="spacingAndGlyphs" stroke="#fff" stroke-width="0.4">5</text>
<rect x="689.3" y="558.08" width="3.7" height="5.17" fill="#fff" stroke="none" stroke-width="1" />
<rect x="770" y="558.08" width="3.7" height="5.17" fill="#fff" stroke="none" stroke-width="1" />
<rect x="713" y="565.54" width="37" height="5.17" fill="#fff" stroke="none" stroke-width="1" />
<text x="677.2" y="570.2125" font-size="6.5" fill="#fff" font-family='"Liberation Serif","Noto Serif CJK SC",serif' font-weight="bold" textLength="2.6" lengthAdjust="spacingAndGlyphs" stroke="#fff" stroke-width="0.4">6</text>
<rect x="689.3" y="565.54" width="3.7" height="5.17" fill="#fff" stroke="none" stroke-width="1" />
<rect x="770" y="565.54" width="3.7" height="5.17" fill="#fff" stroke="none" stroke-width="1" />
<rect x="713" y="573.61" width="34" height="4.37" fill="#fff" stroke="none" stroke-width="1" opacity="0.55"/>
<text x="713" y="577.5812500000001" font-size="5.2" fill="#fff" font-family='"Liberation Serif","Noto Serif CJK SC",serif' font-weight="bold" textLength="34" lengthAdjust="spacingAndGlyphs" stroke="#fff" stroke-width="0.35">空调机房平面图</text>
<text x="677.2" y="577.68125" font-size="6.5" fill="#fff" font-family='"Liberation Serif","Noto Serif CJK SC",serif' font-weight="bold" textLength="2.6" lengthAdjust="spacingAndGlyphs" stroke="#fff" stroke-width="0.4">7</text>
<rect x="689.3" y="573.01" width="3.7" height="5.17" fill="#fff" stroke="none" stroke-width="1" />
<rect x="770" y="573.01" width="3.7" height="5.17" fill="#fff" stroke="none" stroke-width="1" />
<rect x="713" y="580.48" width="33" height="5.17" fill="#fff" stroke="none" stroke-width="1" />
<text x="677.2" y="585.15" font-size="6.5" fill="#fff" font-family='"Liberation Serif","Noto Serif CJK SC",serif' font-weight="bold" textLength="2.6" lengthAdjust="spacingAndGlyphs" stroke="#fff" stroke-width="0.4">8</text>
<rect x="689.3" y="580.48" width="3.7" height="5.17" fill="#fff" stroke="none" stroke-width="1" />
<rect x="770" y="580.48" width="3.7" height="5.17" fill="#fff" stroke="none" stroke-width="1" />
<rect x="713" y="588.55" width="40.7" height="4.37" fill="#fff" stroke="none" stroke-width="1" opacity="0.55"/>
<text x="713" y="592.5187500000001" font-size="5.2" fill="#fff" font-family='"Liberation Serif","Noto Serif CJK SC",serif' font-weight="bold" textLength="40.7" lengthAdjust="spacingAndGlyphs" stroke="#fff" stroke-width="0.35">空调机房管道平面布置图</text>
<text x="677.2" y="592.61875" font-size="6.5" fill="#fff" font-family='"Liberation Serif","Noto Serif CJK SC",serif' font-weight="bold" textLength="2.6" lengthAdjust="spacingAndGlyphs" stroke="#fff" stroke-width="0.4">9</text>
<rect x="689.3" y="587.95" width="3.7" height="5.17" fill="#fff" stroke="none" stroke-width="1" />
<rect x="770" y="587.95" width="3.7" height="5.17" fill="#fff" stroke="none" stroke-width="1" />
<rect x="713" y="595.42" width="48" height="5.17" fill="#fff" stroke="none" stroke-width="1" />
<rect x="675.2" y="595.42" width="3.8" height="5.17" fill="#fff" stroke="none" stroke-width="1" />
<rect x="689.3" y="595.42" width="3.7" height="5.17" fill="#fff" stroke="none" stroke-width="1" />
<rect x="770" y="595.42" width="3.7" height="5.17" fill="#fff" stroke="none" stroke-width="1" />
<rect x="713" y="602.89" width="25.9" height="5.17" fill="#fff" stroke="none" stroke-width="1" />
<rect x="675.2" y="602.89" width="3.8" height="5.17" fill="#fff" stroke="none" stroke-width="1" />
<rect x="689.3" y="602.89" width="3.7" height="5.17" fill="#fff" stroke="none" stroke-width="1" />
<rect x="770" y="602.89" width="3.7" height="5.17" fill="#fff" stroke="none" stroke-width="1" />
<rect x="713" y="610.36" width="25.9" height="5.17" fill="#fff" stroke="none" stroke-width="1" />
<rect x="675.2" y="610.36" width="3.8" height="5.17" fill="#fff" stroke="none" stroke-width="1" />
<rect x="689.3" y="610.36" width="3.7" height="5.17" fill="#fff" stroke="none" stroke-width="1" />
<rect x="770" y="610.36" width="3.7" height="5.17" fill="#fff" stroke="none" stroke-width="1" />
<rect x="713" y="617.83" width="33" height="5.17" fill="#fff" stroke="none" stroke-width="1" />
<rect x="675.2" y="617.83" width="3.8" height="5.17" fill="#fff" stroke="none" stroke-width="1" />
<rect x="689.3" y="617.83" width="3.7" height="5.17" fill="#fff" stroke="none" stroke-width="1" />
<rect x="770" y="617.83" width="3.7" height="5.17" fill="#fff" stroke="none" stroke-width="1" />
<rect x="712" y="625.29" width="41" height="5.17" fill="#fff" stroke="none" stroke-width="1" />
<rect x="675.2" y="625.29" width="3.8" height="5.17" fill="#fff" stroke="none" stroke-width="1" />
<rect x="689.3" y="625.29" width="3.7" height="5.17" fill="#fff" stroke="none" stroke-width="1" />
<rect x="770" y="625.29" width="3.7" height="5.17" fill="#fff" stroke="none" stroke-width="1" />
<rect x="721" y="632.76" width="22" height="5.17" fill="#fff" stroke="none" stroke-width="1" />
<rect x="675.2" y="632.76" width="3.8" height="5.17" fill="#fff" stroke="none" stroke-width="1" />
<rect x="689.3" y="632.76" width="3.7" height="5.17" fill="#fff" stroke="none" stroke-width="1" />
<rect x="770" y="632.76" width="3.7" height="5.17" fill="#fff" stroke="none" stroke-width="1" />
<rect x="721" y="640.83" width="22" height="4.37" fill="#fff" stroke="none" stroke-width="1" opacity="0.55"/>
<text x="721" y="644.8000000000001" font-size="5.2" fill="#fff" font-family='"Liberation Serif","Noto Serif CJK SC",serif' font-weight="bold" textLength="22" lengthAdjust="spacingAndGlyphs" stroke="#fff" stroke-width="0.35">设备材料表</text>
<rect x="675.2" y="640.23" width="3.8" height="5.17" fill="#fff" stroke="none" stroke-width="1" />
<rect x="689.3" y="640.23" width="3.7" height="5.17" fill="#fff" stroke="none" stroke-width="1" />
<rect x="770" y="640.23" width="3.7" height="5.17" fill="#fff" stroke="none" stroke-width="1" />
<line x1="670.3" y1="515.3" x2="670.3" y2="646.1" stroke="#20e020" stroke-width="1" />
<line x1="686.3" y1="515.3" x2="686.3" y2="646.1" stroke="#20e020" stroke-width="1" />
<line x1="705.6" y1="515.3" x2="705.6" y2="646.1" stroke="#20e020" stroke-width="1" />
<line x1="764.6" y1="515.3" x2="764.6" y2="646.1" stroke="#20e020" stroke-width="1" />
<line x1="781.9" y1="515.3" x2="781.9" y2="646.1" stroke="#20e020" stroke-width="1" />
<line x1="670.3" y1="515.3" x2="781.9" y2="515.3" stroke="#20e020" stroke-width="1" />
<line x1="670.3" y1="526.6" x2="781.9" y2="526.6" stroke="#20e020" stroke-width="1" />
<line x1="670.3" y1="534.06875" x2="781.9" y2="534.06875" stroke="#20e020" stroke-width="1" />
<line x1="670.3" y1="541.5375" x2="781.9" y2="541.5375" stroke="#20e020" stroke-width="1" />
<line x1="670.3" y1="549.00625" x2="781.9" y2="549.00625" stroke="#20e020" stroke-width="1" />
<line x1="670.3" y1="556.475" x2="781.9" y2="556.475" stroke="#20e020" stroke-width="1" />
<line x1="670.3" y1="563.94375" x2="781.9" y2="563.94375" stroke="#20e020" stroke-width="1" />
<line x1="670.3" y1="571.4125" x2="781.9" y2="571.4125" stroke="#20e020" stroke-width="1" />
<line x1="670.3" y1="578.88125" x2="781.9" y2="578.88125" stroke="#20e020" stroke-width="1" />
<line x1="670.3" y1="586.35" x2="781.9" y2="586.35" stroke="#20e020" stroke-width="1" />
<line x1="670.3" y1="593.81875" x2="781.9" y2="593.81875" stroke="#20e020" stroke-width="1" />
<line x1="670.3" y1="601.2875" x2="781.9" y2="601.2875" stroke="#20e020" stroke-width="1" />
<line x1="670.3" y1="608.75625" x2="781.9" y2="608.75625" stroke="#20e020" stroke-width="1" />
<line x1="670.3" y1="616.225" x2="781.9" y2="616.225" stroke="#20e020" stroke-width="1" />
<line x1="670.3" y1="623.69375" x2="781.9" y2="623.69375" stroke="#20e020" stroke-width="1" />
<line x1="670.3" y1="631.1625" x2="781.9" y2="631.1625" stroke="#20e020" stroke-width="1" />
<line x1="670.3" y1="638.63125" x2="781.9" y2="638.63125" stroke="#20e020" stroke-width="1" />
<line x1="670.3" y1="646.1" x2="781.9" y2="646.1" stroke="#20e020" stroke-width="1" /></g>
<g id="ui"><defs><linearGradient id="tbg" x1="0" y1="0" x2="0" y2="1"><stop offset="0" stop-color="#eeedeb"/><stop offset="0.72" stop-color="#e9e8e6"/><stop offset="0.80" stop-color="#b9b8b6"/><stop offset="0.86" stop-color="#fbfbfb"/><stop offset="0.93" stop-color="#f4f4f4"/><stop offset="1" stop-color="#2a2a2a"/></linearGradient></defs>
<rect x="0" y="0" width="1049" height="10.7" fill="#ecebe9" stroke="none" stroke-width="1" />
<linearGradient id="tb2" x1="0" y1="0" x2="0" y2="1"><stop offset="0" stop-color="#dcdcdc"/><stop offset="1" stop-color="#b4b4b4"/></linearGradient><linearGradient id="tb3" x1="0" y1="0" x2="0" y2="1"><stop offset="0" stop-color="#b0b0b0"/><stop offset="1" stop-color="#000"/></linearGradient>
<rect x="0" y="10.6" width="1049" height="1.3" fill="url(#tb2)" stroke="none" stroke-width="1" />
<rect x="0" y="11.9" width="1049" height="1.6" fill="#fbfbfb" stroke="none" stroke-width="1" />
<rect x="0" y="13.5" width="1049" height="1.8" fill="url(#tb3)" stroke="none" stroke-width="1" />
<rect x="507.5" y="0" width="25.0" height="9.6" fill="#f3f3f2" stroke="none" stroke-width="1" />
<rect x="532.5" y="0" width="298.5" height="9.8" fill="#fff" stroke="none" stroke-width="1" />
<rect x="919.5" y="0" width="98.5" height="9.8" fill="#fff" stroke="none" stroke-width="1" />
<rect x="832" y="0" width="49" height="9.6" fill="#f1f0ee" stroke="none" stroke-width="1" />
<path d="M1,0 L3.5,5 L8.5,7.6 L16,2.4 L16.6,0 Z" stroke="#aab" stroke-width="0.6" fill="#dfe3e8" />
<path d="M6,0 q3,3 8,0 z" stroke="none" stroke-width="0" fill="#3a9a3a" />
<path d="M8,0 q2,1.6 4,0 z" stroke="none" stroke-width="0" fill="#d04020" />
<path d="M11,3 q3,1 5,-2" stroke="#3a6ac0" stroke-width="1.6" fill="none" />
<line x1="23.3" y1="0" x2="23.3" y2="8.8" stroke="#333" stroke-width="1" />
<path d="M30,0.4 L42,1.6" stroke="#444" stroke-width="1.6" fill="none" />
<path d="M33,0 L42.5,2.8" stroke="#667" stroke-width="1.3" fill="none" />
<circle cx="43.5" cy="3.2" r="2.2" fill="none" stroke="#2a2a90" stroke-width="1.5"/>
<rect x="53.5" y="0" width="11.5" height="4.5" fill="#cfe0f2" stroke="#5a7ab0" stroke-width="1" />
<rect x="57" y="0" width="11.5" height="6.4" fill="#dbe8f6" stroke="#5a7ab0" stroke-width="1" />
<path d="M76,0 L76.5,4 L83,7.4 L91,3.5 L91,0 Z" stroke="#c8a040" stroke-width="0.8" fill="#ecd070" />
<rect x="79" y="0" width="9" height="3" fill="#c4d8ee" stroke="#6a86b8" stroke-width="0.8" />
<path d="M111,0 L104.5,4.2 L101,6" stroke="#111" stroke-width="2.2" fill="none" stroke-linecap="round"/>
<rect x="124.5" y="0.2" width="6.5" height="6.0" fill="#f08048" stroke="#2a4aa0" stroke-width="1.3" />
<rect x="122.5" y="5.6" width="2.0" height="1.8" fill="#2a4aa0" stroke="none" stroke-width="1" />
<line x1="131" y1="0.5" x2="133.5" y2="0" stroke="#c8a030" stroke-width="1.5" />
<line x1="144" y1="0" x2="144" y2="8.8" stroke="#333" stroke-width="1" />
<path d="M153.8,0 H158.4 V2.6 H161.4 L156.1,7.6 L150.8,2.6 H153.8 Z" stroke="none" stroke-width="0" fill="#173a8c" />
<path d="M176.8,0 l1,1.2 l1,-1.2 z" stroke="none" stroke-width="0" fill="#999" />
<path d="M194.4,0 H199 V2.6 H202 L196.7,7.6 L191.4,2.6 H194.4 Z" stroke="none" stroke-width="0" fill="#bfbfbf" />
<path d="M213,0 l1,1.2 l1,-1.2 z" stroke="none" stroke-width="0" fill="#bbb" />
<line x1="222.5" y1="0" x2="222.5" y2="8.8" stroke="#333" stroke-width="1" />
<path d="M231,0 L238,0 L241,3 L238,6 Z" stroke="none" stroke-width="0" fill="#e9a896" />
<path d="M238,3.5 L241.5,1.6 L245,5.5 L243,7.6 L239.5,7 Z" stroke="none" stroke-width="0" fill="#1c5a9c" />
<line x1="259.0" y1="2.5" x2="266.0" y2="6.8" stroke="#c07828" stroke-width="2" />
<line x1="259.0" y1="2.5" x2="261.5" y2="4" stroke="#555" stroke-width="2" />
<circle cx="256.5" cy="0" r="4" fill="#b8d8f0" stroke="#4a5a78" stroke-width="1.4"/>
<line x1="282.5" y1="2.5" x2="289.5" y2="6.8" stroke="#c07828" stroke-width="2" />
<line x1="282.5" y1="2.5" x2="285" y2="4" stroke="#555" stroke-width="2" />
<circle cx="280" cy="0" r="4" fill="#b8d8f0" stroke="#4a5a78" stroke-width="1.4"/>
<line x1="304.5" y1="2.5" x2="311.5" y2="6.8" stroke="#c07828" stroke-width="2" />
<line x1="304.5" y1="2.5" x2="307" y2="4" stroke="#555" stroke-width="2" />
<circle cx="302" cy="0" r="4" fill="#b8d8f0" stroke="#4a5a78" stroke-width="1.4"/>
<path d="M286.8,7.5 L290.8,7.5 L290.8,3.8 Z" stroke="none" stroke-width="0" fill="#000" />
<line x1="320" y1="0" x2="320" y2="8.8" stroke="#333" stroke-width="1" />
<path d="M328,0.5 q3,1.5 5,0 M328,3 q3,2 5,0 M328.5,5.4 q2.5,1.4 4.5,0" stroke="#3a5aa0" stroke-width="1.3" fill="none" />
<text x="336.2" y="7.6" font-size="8.5" fill="#222" font-family='"Liberation Sans",sans-serif' font-weight="bold" >A</text>
<rect x="350.6" y="0" width="14.8" height="7" fill="#eef2fa" stroke="#2c48b0" stroke-width="1.5" />
<rect x="353" y="1" width="3" height="2" fill="#d8c040" stroke="none" stroke-width="1" />
<rect x="359" y="1" width="3.5" height="2.2" fill="#556" stroke="none" stroke-width="1" />
<rect x="353" y="4.2" width="2.4" height="1.8" fill="#556" stroke="none" stroke-width="1" />
<rect x="359.5" y="4.6" width="2.5" height="1.6" fill="#d8c040" stroke="none" stroke-width="1" />
<rect x="373.6" y="0" width="7.0" height="7" fill="#eef2fa" stroke="#2c48b0" stroke-width="1.5" />
<rect x="375.6" y="1.6" width="2.4" height="2.4" fill="#778" stroke="none" stroke-width="1" />
<path d="M383.4,0 h5 l-2.5,3 z" stroke="none" stroke-width="0" fill="#223" />
<rect x="384.4" y="3" width="4.0" height="3.4" fill="#e0c840" stroke="#333" stroke-width="0.8" />
<path d="M396,0 H411.6 V7.4 H396 Z" stroke="none" stroke-width="0" fill="#93a3b2" />
<path d="M398,7 L411,1.5 V4 L402,7.4 Z" stroke="none" stroke-width="0" fill="#6f88a8" />
<path d="M397,1 h9 v3 h-9 z" stroke="none" stroke-width="0" fill="#b8c4cc" />
<rect x="421" y="0" width="14" height="6.6" fill="#f6f6f6" stroke="#9a9a9a" stroke-width="1.2" />
<circle cx="427" cy="0" r="3.2" fill="#fff" stroke="#d82020" stroke-width="1.6"/>
<rect x="430.5" y="0" width="3.5" height="1.6" fill="#d82020" stroke="none" stroke-width="1" />
<rect x="444" y="0" width="12" height="7.5" fill="#000" stroke="none" stroke-width="1" />
<rect x="445.4" y="1.2" width="1.4" height="1.6" fill="#fff" stroke="none" stroke-width="1" />
<rect x="445.4" y="4" width="1.4" height="1.6" fill="#fff" stroke="none" stroke-width="1" />
<rect x="449.4" y="1.2" width="1.4" height="1.6" fill="#fff" stroke="none" stroke-width="1" />
<rect x="449.4" y="4" width="1.4" height="1.6" fill="#fff" stroke="none" stroke-width="1" />
<rect x="453.4" y="1.2" width="1.4" height="1.6" fill="#fff" stroke="none" stroke-width="1" />
<rect x="453.4" y="4" width="1.4" height="1.6" fill="#fff" stroke="none" stroke-width="1" />
<rect x="444" y="0" width="12" height="0.8" fill="#c82020" stroke="none" stroke-width="1" />
<line x1="464" y1="0" x2="464" y2="8.8" stroke="#333" stroke-width="1" />
<path d="M471.7,0 H486.7 V5.4 Q479,7.6 471.7,5.4 Z" stroke="none" stroke-width="0" fill="#1c4cb0" />
<text x="476.6" y="5.8" font-size="8" fill="#fff" font-family='"Liberation Sans",sans-serif' font-weight="bold" >?</text>
<line x1="495" y1="0" x2="495" y2="11" stroke="#b5b5b5" stroke-width="1" />
<line x1="496.2" y1="0" x2="496.2" y2="11" stroke="#fff" stroke-width="1.2" />
<line x1="500" y1="0" x2="500" y2="11" stroke="#b5b5b5" stroke-width="1" />
<line x1="501.2" y1="0" x2="501.2" y2="11" stroke="#fff" stroke-width="1.2" />
<line x1="504.5" y1="0" x2="504.5" y2="11" stroke="#b5b5b5" stroke-width="1" />
<line x1="505.7" y1="0" x2="505.7" y2="11" stroke="#fff" stroke-width="1.2" />
<path d="M512.5,1.2 L520.5,5.8 L528.3,1.2 L524,0 H517 Z" stroke="none" stroke-width="0" fill="#5a78b0" />
<path d="M514,0 L520.5,3.4 L527,0 Z" stroke="none" stroke-width="0" fill="#b0c4e0" />
<path d="M513,3 L520.5,7 L528,3" stroke="#4a68a0" stroke-width="1" fill="none" />
<path d="M541.5,0 Q541.5,2.8 543,3 V5.6 H545 V3 Q546.5,2.8 546.5,0 Z" stroke="#99a" stroke-width="0.6" fill="#f4f0d0" />
<rect x="542.8" y="4" width="2.4" height="1.8" fill="#667" stroke="none" stroke-width="1" />
<circle cx="559.5" cy="-0.8" r="6" fill="#f4d428" stroke="#6a6a30" stroke-width="1"/>
<line x1="553.5" y1="4.2" x2="555" y2="5.6" stroke="#c8a020" stroke-width="1" />
<line x1="565.5" y1="4.2" x2="564" y2="5.6" stroke="#c8a020" stroke-width="1" />
<circle cx="574.5" cy="0" r="4.2" fill="#b4c4d4" stroke="#8898a8" stroke-width="0.8"/>
<rect x="574.5" y="0" width="7.5" height="5.6" fill="#fdfdff" stroke="#8a9ac8" stroke-width="1" />
<path d="M591.8,0 V4.4 Q596,6.6 600,4.4 V0 Z" stroke="#88801c" stroke-width="0.7" fill="#dcd628" />
<path d="M595,0 v3.6" stroke="#a8a020" stroke-width="0.8" fill="none" />
<rect x="604" y="-1" width="8" height="5.2" fill="#fff" stroke="#000" stroke-width="1.6" />
<path d="M618.4,0 v1.6 q0,1.6 1.8,1.6 q1.8,0 1.8,-1.6 v-1.6" stroke="#000" stroke-width="1.1" fill="none" />
<path d="M821,0 h5 l-2.5,3 z" stroke="none" stroke-width="0" fill="#000" />
<path d="M838,0 L846,4 L852,0 Z" stroke="#807818" stroke-width="0.5" fill="#e8dc48" />
<path d="M838,1.2 L846,5.4 L852,1.4" stroke="#988c20" stroke-width="1.2" fill="none" />
<path d="M834.4,7 l3.4,-3.4 m-2.6,0 h2.6 v2.6" stroke="#1c3c9c" stroke-width="1.1" fill="none" />
<path d="M858.5,0 L866,4.2 L874,0 Z" stroke="none" stroke-width="0" fill="#90b0dc" />
<path d="M858.5,0.6 L866,4.8 L874,0.6 M860,3 L866,6.4 L873,2.6" stroke="#4a6cac" stroke-width="1.2" fill="none" />
<line x1="883.5" y1="0" x2="883.5" y2="11" stroke="#b5b5b5" stroke-width="1" />
<line x1="884.7" y1="0" x2="884.7" y2="11" stroke="#fff" stroke-width="1.2" />
<line x1="888" y1="0" x2="888" y2="11" stroke="#b5b5b5" stroke-width="1" />
<line x1="889.2" y1="0" x2="889.2" y2="11" stroke="#fff" stroke-width="1.2" />
<path d="M913,0 L905,5 L900.5,7.4" stroke="#222" stroke-width="2.4" fill="none" stroke-linecap="round"/>
<path d="M909,0.6 L906,3.4" stroke="#d87828" stroke-width="1.6" fill="none" />
<path d="M899.5,0 l3,3" stroke="#555" stroke-width="1.2" fill="none" />
<text x="924" y="2.6" font-size="11.5" fill="#000" font-family='"Liberation Mono",monospace' font-weight="normal" textLength="53.5" lengthAdjust="spacingAndGlyphs" >_DOCT_DIM</text>
<path d="M1008,0 h5.4 l-2.7,3 z" stroke="none" stroke-width="0" fill="#000" />
<line x1="1021" y1="0" x2="1021" y2="8.8" stroke="#333" stroke-width="1" />
<path d="M1028.5,2.8 V7.6 M1043.5,2.8 V7.6 M1029,5.2 H1043 M1031.5,3.8 L1029.4,5.2 L1031.5,6.6 M1040.5,3.8 L1042.6,5.2 L1040.5,6.6" stroke="#000" stroke-width="1.1" fill="none" />
<path d="M1033,2.6 Q1036,-1 1041,0 L1040,2.2 Q1037,1.2 1035,3.2 Z" stroke="none" stroke-width="0" fill="#223" />
<rect x="0" y="722.8" width="1049" height="19.2" fill="#efefef" stroke="none" stroke-width="1" />
<rect x="0" y="737.2" width="1049" height="1.4" fill="#fbfbfb" stroke="none" stroke-width="1" />
<rect x="0" y="738.6" width="1049" height="3.4" fill="#f3f3f3" stroke="none" stroke-width="1" />
<rect x="0" y="723" width="22" height="13" fill="#f7f7f7" stroke="none" stroke-width="1" />
<polyline points="0,736 21.5,736 25,723.3" stroke="#000" stroke-width="1.6" fill="none" />
<text x="-12.4" y="733.8" font-size="12" fill="#000" font-family='"Liberation Serif","Noto Serif CJK SC",serif' font-weight="normal" >布局</text>
<text x="12" y="733.8" font-size="11.5" fill="#000" font-family='"Liberation Serif","Noto Serif CJK SC",serif' font-weight="normal" textLength="4.6" lengthAdjust="spacingAndGlyphs" >1</text></g>
</svg>
</body></html>
